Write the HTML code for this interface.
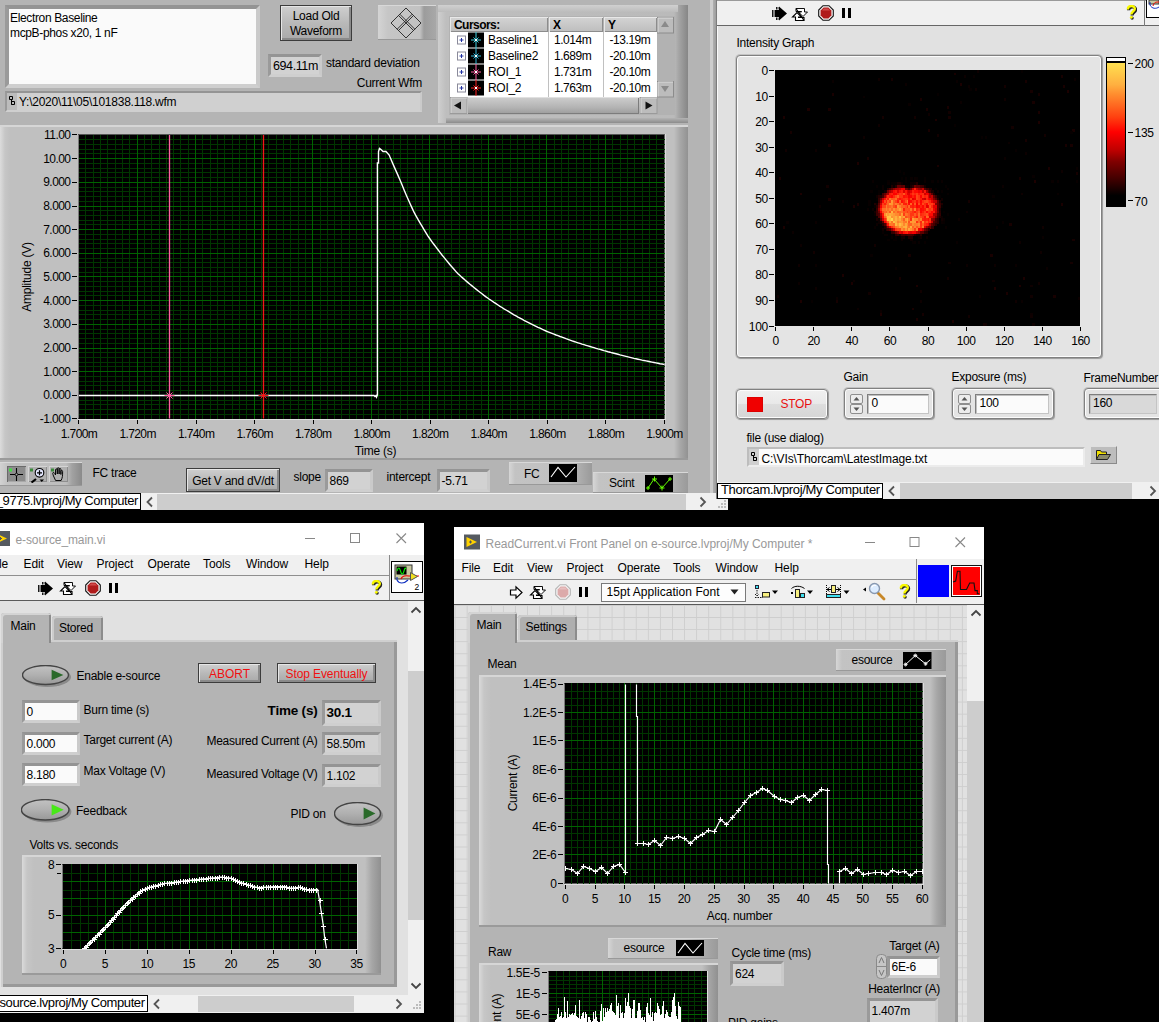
<!DOCTYPE html><html><head><meta charset="utf-8"><title>LabVIEW</title><style>
*{box-sizing:border-box;margin:0;padding:0}
html,body{width:1159px;height:1022px;overflow:hidden;background:#000}
body{position:relative;font-family:"Liberation Sans",sans-serif;font-size:12px;color:#000}
.a{position:absolute}
.t{position:absolute;white-space:nowrap;line-height:14px;font-size:12px;letter-spacing:-0.25px}
.r{text-align:right}
.win{position:absolute;overflow:hidden}
.fld{position:absolute;border:3px solid;border-color:#949494 #cacaca #cfcfcf #9a9a9a;background:#d2d2d2;overflow:hidden}
.fld.w{background:#fafafa}
.fld .t{left:2px}
.btn{position:absolute;border:1px solid #3c3c3c;background:linear-gradient(#cfcfcf,#b9b9b9 50%,#a9a9a9);box-shadow:inset 1px 1px 0 #e6e6e6,inset -2px -2px 0 #8a8a8a;text-align:center}
.leg{position:absolute;background:linear-gradient(90deg,#d6d6d6 0,#c3c3c3 6px,#c0c0c0 70%,#9a9a9a 100%);box-shadow:inset 0 1px 0 #d8d8d8,inset 0 -1px 0 #999}
.tick{position:absolute;background:#000}
.sb{position:absolute;background:#f0f0f0}
.th{position:absolute;background:#cdcdcd}
.sys{position:absolute;border:1px solid #808080;border-radius:4px;background:#e4e4e4;box-shadow:inset 0 0 0 1px #fcfcfc,0 0 0 1px rgba(120,120,120,.28),1px 1px 1px #aaa}
</style></head><body>
<div class="a" style="left:0;top:0;width:728px;height:510px;background:#f0f0f0"></div>
<div class="a" style="left:0;top:0;width:710px;height:493px;background:#b4b4b4"></div>
<div class="a" style="left:710px;top:0;width:2.500px;height:493px;background:#cdcdcd"></div><div class="a" style="left:712.500px;top:0;width:4px;height:493px;background:linear-gradient(90deg,#b0b0b0,#969696)"></div>
<div class="fld w" style="left:5px;top:5px;width:255px;height:83px;border-width:4px"></div>
<div class="t " style="left:10.0px;top:11.0px;letter-spacing:-0.35px">Electron Baseline</div>
<div class="t " style="left:10.0px;top:26.0px;letter-spacing:-0.35px">mcpB-phos x20, 1 nF</div>
<div class="fld" style="left:5px;top:91px;width:417px;height:21px;border-width:2px;background:#d0d0d0"></div>
<div class="a" style="left:7px;top:93px;width:10px;height:17px;background:#bcbcbc"></div>
<svg class="a" style="left:8px;top:95px" width="8" height="12"><path d="M1.5 1.5h3v3h-3zM3.5 4.5v5M3.5 6.5h3v3h-3z" fill="none" stroke="#000"/></svg>
<div class="t " style="left:19.0px;top:94.5px;">Y:\2020\11\05\101838.118.wfm</div>
<div class="btn" style="left:280px;top:5px;width:72px;height:36px"></div>
<div class="t" style="left:316.0px;top:9.0px;width:200px;margin-left:-100px;text-align:center;">Load Old</div>
<div class="t" style="left:316.0px;top:24.0px;width:200px;margin-left:-100px;text-align:center;">Waveform</div>
<div class="leg" style="left:378px;top:5px;width:58px;height:35px;background:linear-gradient(90deg,#d4d4d4 0,#c6c6c6 10px,#c2c2c2 42px,#9c9c9c 46px,#a8a8a8 100%)"></div>
<svg class="a" style="left:390px;top:7px" width="32" height="32" viewBox="0 0 32 32"><path d="M16 1L31 16L16 31L1 16ZM8.5 8.5L23.5 23.5M23.5 8.5L8.5 23.5M9.8 7.2L24.8 22.2M22.2 7.2L7.2 22.2" fill="none" stroke="#222" stroke-width="0.9"/></svg>
<div class="fld " style="left:268.0px;top:53.5px;width:53.5px;height:23.5px;"><div class="t" style="top:2.2px;letter-spacing:-0.4px;font-size:12.5px">694.11m</div></div>
<div class="t " style="left:326.0px;top:55.5px;">standard deviation</div>
<div class="t r" style="right:737.0px;top:76.0px;">Current Wfm</div>
<div class="a" style="left:438px;top:5px;width:250px;height:118px;background:linear-gradient(90deg,#cfcfcf 0,#bebebe 8px,#bababa 236px,#a4a4a4 241px,#868686 250px)"></div>
<div class="a" style="left:438px;top:5px;width:240px;height:7px;background:linear-gradient(#d0d0d0,#bcbcbc)"></div>
<div class="a" style="left:446px;top:118px;width:242px;height:5px;background:linear-gradient(#b4b4b4,#8c8c8c)"></div>
<div class="a" style="left:449px;top:15.500px;width:225.500px;height:99.500px;background:#b2b2b2"></div>
<div class="a" style="left:450px;top:31.500px;width:207px;height:65.500px;background:#fff"></div>
<div class="a" style="left:657px;top:32.500px;width:16.500px;height:48px;background:#b2b2b2"></div>
<div class="a" style="left:450px;top:16.500px;width:98px;height:15px;background:linear-gradient(#d4d4d4,#bdbdbd);box-shadow:inset 1px 1px 0 #e8e8e8,inset -1px -1px 0 #8c8c8c"></div>
<div class="t " style="left:454.0px;top:17.5px;font-weight:bold;letter-spacing:-0.55px">Cursors:</div>
<div class="a" style="left:549px;top:16.500px;width:54px;height:15px;background:linear-gradient(#d4d4d4,#bdbdbd);box-shadow:inset 1px 1px 0 #e8e8e8,inset -1px -1px 0 #8c8c8c"></div>
<div class="t " style="left:553.0px;top:17.5px;font-weight:bold;letter-spacing:-0.55px">X</div>
<div class="a" style="left:604px;top:16.500px;width:53px;height:15px;background:linear-gradient(#d4d4d4,#bdbdbd);box-shadow:inset 1px 1px 0 #e8e8e8,inset -1px -1px 0 #8c8c8c"></div>
<div class="t " style="left:608.0px;top:17.5px;font-weight:bold;letter-spacing:-0.55px">Y</div>
<div class="a" style="left:548px;top:31.500px;width:1px;height:65.500px;background:#c0c0c0"></div><div class="a" style="left:603px;top:31.500px;width:1px;height:65.500px;background:#c0c0c0"></div>
<svg class="a" style="left:457px;top:31.5px" width="28" height="16"><rect x="0.500" y="4" width="8" height="8" fill="#fff" stroke="#8a8a9a"/><path d="M2.500 8h4M4.500 6v4" stroke="#2030a0"/><rect x="11" y="0.500" width="16" height="15" fill="#000"/><path d="M19 0v16M14 8h10M16.500 5.500l5 5M21.500 5.500l-5 5" stroke="#3fd0e0" stroke-width="1"/><rect x="18" y="7" width="2" height="2" fill="#fff"/></svg>
<div class="t " style="left:488.0px;top:33.0px;letter-spacing:-0.3px">Baseline1</div>
<div class="t " style="left:554.0px;top:33.0px;letter-spacing:-0.45px">1.014m</div>
<div class="t " style="left:609.5px;top:33.0px;letter-spacing:-0.45px">-13.19m</div>
<svg class="a" style="left:457px;top:47.5px" width="28" height="16"><rect x="0.500" y="4" width="8" height="8" fill="#fff" stroke="#8a8a9a"/><path d="M2.500 8h4M4.500 6v4" stroke="#2030a0"/><rect x="11" y="0.500" width="16" height="15" fill="#000"/><path d="M19 0v16M14 8h10M16.500 5.500l5 5M21.500 5.500l-5 5" stroke="#35b8d8" stroke-width="1"/><rect x="18" y="7" width="2" height="2" fill="#fff"/></svg>
<div class="t " style="left:488.0px;top:49.0px;letter-spacing:-0.3px">Baseline2</div>
<div class="t " style="left:554.0px;top:49.0px;letter-spacing:-0.45px">1.689m</div>
<div class="t " style="left:609.5px;top:49.0px;letter-spacing:-0.45px">-20.10m</div>
<svg class="a" style="left:457px;top:63.5px" width="28" height="16"><rect x="0.500" y="4" width="8" height="8" fill="#fff" stroke="#8a8a9a"/><path d="M2.500 8h4M4.500 6v4" stroke="#2030a0"/><rect x="11" y="0.500" width="16" height="15" fill="#000"/><path d="M19 0v16M14 8h10M16.500 5.500l5 5M21.500 5.500l-5 5" stroke="#ff5fa0" stroke-width="1"/><rect x="18" y="7" width="2" height="2" fill="#fff"/></svg>
<div class="t " style="left:488.0px;top:65.0px;letter-spacing:-0.3px">ROI_1</div>
<div class="t " style="left:554.0px;top:65.0px;letter-spacing:-0.45px">1.731m</div>
<div class="t " style="left:609.5px;top:65.0px;letter-spacing:-0.45px">-20.10m</div>
<svg class="a" style="left:457px;top:79.5px" width="28" height="16"><rect x="0.500" y="4" width="8" height="8" fill="#fff" stroke="#8a8a9a"/><path d="M2.500 8h4M4.500 6v4" stroke="#2030a0"/><rect x="11" y="0.500" width="16" height="15" fill="#000"/><path d="M19 0v16M14 8h10M16.500 5.500l5 5M21.500 5.500l-5 5" stroke="#ff2020" stroke-width="1"/><rect x="18" y="7" width="2" height="2" fill="#fff"/></svg>
<div class="t " style="left:488.0px;top:81.0px;letter-spacing:-0.3px">ROI_2</div>
<div class="t " style="left:554.0px;top:81.0px;letter-spacing:-0.45px">1.763m</div>
<div class="t " style="left:609.5px;top:81.0px;letter-spacing:-0.45px">-20.10m</div>
<svg class="a" style="left:657px;top:16.5px" width="17" height="17"><rect x="0.500" y="0.500" width="16" height="15.500" fill="#bcbcbc" stroke="#8c8c8c"/><path d="M1 15.500V1H16" stroke="#dcdcdc" fill="none"/><path d="M4 10L8 4L12 10Z" fill="#8a8a8a"/></svg>
<svg class="a" style="left:657px;top:80.5px" width="17" height="17"><rect x="0.500" y="0.500" width="16" height="15.500" fill="#bcbcbc" stroke="#8c8c8c"/><path d="M1 15.500V1H16" stroke="#dcdcdc" fill="none"/><path d="M4 5L8 11L12 5Z" fill="#8a8a8a"/></svg>
<div class="a" style="left:450px;top:97px;width:207px;height:17px;background:linear-gradient(#c8c8c8,#aaa)"></div>
<div class="a" style="left:466.500px;top:97px;width:172px;height:17px;background:linear-gradient(#cecece,#b4b4b4 60%,#9c9c9c);box-shadow:inset 1px 1px 0 #e0e0e0,inset -1px -1px 0 #7c7c7c"></div>
<svg class="a" style="left:450.0px;top:97px" width="18" height="17"><rect x="0.500" y="0.500" width="16.500" height="16" fill="#bcbcbc" stroke="#9a9a9a"/><path d="M1 16V1H17" stroke="#d8d8d8" fill="none"/><path d="M11 4.500L4 8.500L11 12.500Z" fill="#111"/></svg>
<svg class="a" style="left:639.5px;top:97px" width="18" height="17"><rect x="0.500" y="0.500" width="16.500" height="16" fill="#bcbcbc" stroke="#9a9a9a"/><path d="M1 16V1H17" stroke="#d8d8d8" fill="none"/><path d="M5.500 4.500L12.500 8.500L5.500 12.500Z" fill="#111"/></svg>
<div class="a" style="left:0;top:125px;width:688px;height:335px;background:linear-gradient(90deg,#dcdcdc 0,#c6c6c6 5px,#c0c0c0 10px,#c0c0c0 674px,#a8a8a8 680px,#8f8f8f 689px);box-shadow:inset 0 2px 0 #d6d6d6,inset 0 -2px 0 #9a9a9a"></div>
<svg class="a" style="left:78.0px;top:134.0px" width="586.5" height="285.0" viewBox="78.0 134.0 586.5 285.0"><rect x="78.0" y="134.0" width="586.5" height="285.0" fill="#000"/><path d="M85.5 134.0V419.0M93.5 134.0V419.0M100.5 134.0V419.0M107.5 134.0V419.0M115.5 134.0V419.0M122.5 134.0V419.0M129.5 134.0V419.0M144.5 134.0V419.0M151.5 134.0V419.0M159.5 134.0V419.0M166.5 134.0V419.0M173.5 134.0V419.0M180.5 134.0V419.0M188.5 134.0V419.0M202.5 134.0V419.0M210.5 134.0V419.0M217.5 134.0V419.0M224.5 134.0V419.0M232.5 134.0V419.0M239.5 134.0V419.0M246.5 134.0V419.0M261.5 134.0V419.0M268.5 134.0V419.0M276.5 134.0V419.0M283.5 134.0V419.0M290.5 134.0V419.0M298.5 134.0V419.0M305.5 134.0V419.0M320.5 134.0V419.0M327.5 134.0V419.0M334.5 134.0V419.0M341.5 134.0V419.0M349.5 134.0V419.0M356.5 134.0V419.0M363.5 134.0V419.0M378.5 134.0V419.0M385.5 134.0V419.0M393.5 134.0V419.0M400.5 134.0V419.0M407.5 134.0V419.0M415.5 134.0V419.0M422.5 134.0V419.0M437.5 134.0V419.0M444.5 134.0V419.0M451.5 134.0V419.0M459.5 134.0V419.0M466.5 134.0V419.0M473.5 134.0V419.0M481.5 134.0V419.0M495.5 134.0V419.0M502.5 134.0V419.0M510.5 134.0V419.0M517.5 134.0V419.0M524.5 134.0V419.0M532.5 134.0V419.0M539.5 134.0V419.0M554.5 134.0V419.0M561.5 134.0V419.0M568.5 134.0V419.0M576.5 134.0V419.0M583.5 134.0V419.0M590.5 134.0V419.0M598.5 134.0V419.0M612.5 134.0V419.0M620.5 134.0V419.0M627.5 134.0V419.0M634.5 134.0V419.0M642.5 134.0V419.0M649.5 134.0V419.0M656.5 134.0V419.0M78.0 414.5H664.5M78.0 409.5H664.5M78.0 404.5H664.5M78.0 400.5H664.5M78.0 390.5H664.5M78.0 385.5H664.5M78.0 381.5H664.5M78.0 376.5H664.5M78.0 366.5H664.5M78.0 362.5H664.5M78.0 357.5H664.5M78.0 352.5H664.5M78.0 343.5H664.5M78.0 338.5H664.5M78.0 333.5H664.5M78.0 329.5H664.5M78.0 319.5H664.5M78.0 314.5H664.5M78.0 310.5H664.5M78.0 305.5H664.5M78.0 295.5H664.5M78.0 291.5H664.5M78.0 286.5H664.5M78.0 281.5H664.5M78.0 272.5H664.5M78.0 267.5H664.5M78.0 262.5H664.5M78.0 258.5H664.5M78.0 248.5H664.5M78.0 243.5H664.5M78.0 239.5H664.5M78.0 234.5H664.5M78.0 224.5H664.5M78.0 220.5H664.5M78.0 215.5H664.5M78.0 210.5H664.5M78.0 201.5H664.5M78.0 196.5H664.5M78.0 191.5H664.5M78.0 187.5H664.5M78.0 177.5H664.5M78.0 172.5H664.5M78.0 168.5H664.5M78.0 163.5H664.5M78.0 153.5H664.5M78.0 149.5H664.5M78.0 144.5H664.5M78.0 139.5H664.5" stroke="#003600" stroke-width="1" fill="none" shape-rendering="crispEdges"/><path d="M137.5 134.0V419.0M195.5 134.0V419.0M254.5 134.0V419.0M312.5 134.0V419.0M371.5 134.0V419.0M429.5 134.0V419.0M488.5 134.0V419.0M546.5 134.0V419.0M605.5 134.0V419.0M78.0 395.5H664.5M78.0 371.5H664.5M78.0 348.5H664.5M78.0 324.5H664.5M78.0 300.5H664.5M78.0 276.5H664.5M78.0 253.5H664.5M78.0 229.5H664.5M78.0 206.5H664.5M78.0 182.5H664.5M78.0 158.5H664.5" stroke="#006300" stroke-width="1" fill="none" shape-rendering="crispEdges"/><polyline points="78.5,395.5 374.0,395.5 375.0,396.5 376.0,395.5 376.5,397.0 377.4,395.0 377.4,163.0 378.5,163.0 378.5,151.7 379.5,148.4 381.0,149.5 383.0,151.5 386.0,151.5 389.2,155.0 390.0,157.1 392.0,161.8 394.0,166.4 396.0,170.9 398.0,175.4 400.0,179.9 402.0,184.8 404.0,189.7 406.0,194.4 408.0,199.0 410.0,203.5 412.0,207.9 414.0,212.2 416.0,215.8 418.0,219.4 420.0,222.8 422.0,226.2 424.0,229.6 426.0,232.9 428.0,236.1 430.0,239.0 432.0,241.8 434.0,244.5 436.0,247.2 438.0,249.8 440.0,252.4 442.0,255.0 444.0,257.4 446.0,259.9 448.0,262.3 450.0,264.7 452.0,267.0 454.0,269.3 456.0,271.6 458.0,273.8 460.0,275.6 462.0,277.4 464.0,279.1 466.0,280.9 468.0,282.6 470.0,284.3 472.0,285.9 474.0,287.5 476.0,289.1 478.0,290.7 480.0,292.3 482.0,293.8 484.0,295.4 486.0,296.9 488.0,298.3 490.0,299.7 492.0,301.0 494.0,302.4 496.0,303.7 498.0,305.0 500.0,306.3 502.0,307.5 504.0,308.8 506.0,310.0 508.0,311.2 510.0,312.4 512.0,313.6 514.0,314.8 516.0,315.9 518.0,317.1 520.0,318.1 522.0,319.2 524.0,320.3 526.0,321.3 528.0,322.3 530.0,323.3 532.0,324.3 534.0,325.3 536.0,326.3 538.0,327.3 540.0,328.2 542.0,329.2 544.0,330.1 546.0,331.0 548.0,331.8 550.0,332.6 552.0,333.4 554.0,334.2 556.0,335.0 558.0,335.7 560.0,336.5 562.0,337.2 564.0,337.9 566.0,338.7 568.0,339.4 570.0,340.1 572.0,340.8 574.0,341.5 576.0,342.2 578.0,342.8 580.0,343.4 582.0,344.1 584.0,344.7 586.0,345.3 588.0,345.9 590.0,346.5 592.0,347.1 594.0,347.7 596.0,348.3 598.0,348.9 600.0,349.4 602.0,350.0 604.0,350.6 606.0,351.1 608.0,351.7 610.0,352.2 612.0,352.8 614.0,353.3 616.0,353.8 618.0,354.3 620.0,354.9 622.0,355.4 624.0,355.9 626.0,356.4 628.0,356.9 630.0,357.4 632.0,357.9 634.0,358.4 636.0,358.8 638.0,359.2 640.0,359.6 642.0,360.1 644.0,360.5 646.0,360.9 648.0,361.3 650.0,361.7 652.0,362.1 654.0,362.5 656.0,362.9 658.0,363.3 660.0,363.7 662.0,364.0 664.0,364.4 664.5,364.5" fill="none" stroke="#fff" stroke-width="1.4"/><path d="M169.5 134.5V418.5" stroke="#ff5fa0" stroke-width="1.3"/><path d="M263.5 134.5V418.5" stroke="#f01818" stroke-width="1.3"/><path d="M164.5 395.5h10M166.5 392.5l6 6M172.5 392.5l-6 6" stroke="#ff5fa0" stroke-width="1"/><path d="M258.5 395.5h10M260.5 392.5l6 6M266.5 392.5l-6 6" stroke="#f01818" stroke-width="1"/><path d="M78.5 134.5V418.5" stroke="#7a7a7a" stroke-width="1"/><path d="M78.5 134.5H664.0" stroke="#555" stroke-width="1"/></svg>
<div class="a" style="left:78.0px;top:419.0px;width:587.5px;height:1px;background:#dedede"></div><div class="a" style="left:664.5px;top:134.0px;width:1px;height:286.0px;background:#dedede"></div>
<div class="t r" style="right:1088.5px;top:412.0px;letter-spacing:-0.55px">-1.000</div>
<div class="tick" style="left:72px;top:418px;width:5px;height:1px"></div>
<div class="t r" style="right:1088.5px;top:388.3px;letter-spacing:-0.55px">0.000</div>
<div class="tick" style="left:72px;top:395px;width:5px;height:1px"></div>
<div class="t r" style="right:1088.5px;top:364.7px;letter-spacing:-0.55px">1.000</div>
<div class="tick" style="left:72px;top:371px;width:5px;height:1px"></div>
<div class="t r" style="right:1088.5px;top:341.0px;letter-spacing:-0.55px">2.000</div>
<div class="tick" style="left:72px;top:348px;width:5px;height:1px"></div>
<div class="t r" style="right:1088.5px;top:317.3px;letter-spacing:-0.55px">3.000</div>
<div class="tick" style="left:72px;top:324px;width:5px;height:1px"></div>
<div class="t r" style="right:1088.5px;top:293.7px;letter-spacing:-0.55px">4.000</div>
<div class="tick" style="left:72px;top:300px;width:5px;height:1px"></div>
<div class="t r" style="right:1088.5px;top:270.0px;letter-spacing:-0.55px">5.000</div>
<div class="tick" style="left:72px;top:276px;width:5px;height:1px"></div>
<div class="t r" style="right:1088.5px;top:246.3px;letter-spacing:-0.55px">6.000</div>
<div class="tick" style="left:72px;top:253px;width:5px;height:1px"></div>
<div class="t r" style="right:1088.5px;top:222.7px;letter-spacing:-0.55px">7.000</div>
<div class="tick" style="left:72px;top:229px;width:5px;height:1px"></div>
<div class="t r" style="right:1088.5px;top:199.0px;letter-spacing:-0.55px">8.000</div>
<div class="tick" style="left:72px;top:206px;width:5px;height:1px"></div>
<div class="t r" style="right:1088.5px;top:175.3px;letter-spacing:-0.55px">9.000</div>
<div class="tick" style="left:72px;top:182px;width:5px;height:1px"></div>
<div class="t r" style="right:1088.5px;top:151.7px;letter-spacing:-0.55px">10.00</div>
<div class="tick" style="left:72px;top:158px;width:5px;height:1px"></div>
<div class="t r" style="right:1088.5px;top:128.0px;letter-spacing:-0.55px">11.00</div>
<div class="tick" style="left:72px;top:134px;width:5px;height:1px"></div>
<div class="t" style="left:79.0px;top:426.5px;width:200px;margin-left:-100px;text-align:center;letter-spacing:-0.6px">1.700m</div>
<div class="tick" style="left:78px;top:420px;width:1px;height:4px"></div>
<div class="t" style="left:137.6px;top:426.5px;width:200px;margin-left:-100px;text-align:center;letter-spacing:-0.6px">1.720m</div>
<div class="tick" style="left:137px;top:420px;width:1px;height:4px"></div>
<div class="t" style="left:196.1px;top:426.5px;width:200px;margin-left:-100px;text-align:center;letter-spacing:-0.6px">1.740m</div>
<div class="tick" style="left:196px;top:420px;width:1px;height:4px"></div>
<div class="t" style="left:254.7px;top:426.5px;width:200px;margin-left:-100px;text-align:center;letter-spacing:-0.6px">1.760m</div>
<div class="tick" style="left:254px;top:420px;width:1px;height:4px"></div>
<div class="t" style="left:313.2px;top:426.5px;width:200px;margin-left:-100px;text-align:center;letter-spacing:-0.6px">1.780m</div>
<div class="tick" style="left:313px;top:420px;width:1px;height:4px"></div>
<div class="t" style="left:371.8px;top:426.5px;width:200px;margin-left:-100px;text-align:center;letter-spacing:-0.6px">1.800m</div>
<div class="tick" style="left:371px;top:420px;width:1px;height:4px"></div>
<div class="t" style="left:430.3px;top:426.5px;width:200px;margin-left:-100px;text-align:center;letter-spacing:-0.6px">1.820m</div>
<div class="tick" style="left:430px;top:420px;width:1px;height:4px"></div>
<div class="t" style="left:488.8px;top:426.5px;width:200px;margin-left:-100px;text-align:center;letter-spacing:-0.6px">1.840m</div>
<div class="tick" style="left:488px;top:420px;width:1px;height:4px"></div>
<div class="t" style="left:547.4px;top:426.5px;width:200px;margin-left:-100px;text-align:center;letter-spacing:-0.6px">1.860m</div>
<div class="tick" style="left:547px;top:420px;width:1px;height:4px"></div>
<div class="t" style="left:605.9px;top:426.5px;width:200px;margin-left:-100px;text-align:center;letter-spacing:-0.6px">1.880m</div>
<div class="tick" style="left:605px;top:420px;width:1px;height:4px"></div>
<div class="t" style="left:664.5px;top:426.5px;width:200px;margin-left:-100px;text-align:center;letter-spacing:-0.6px">1.900m</div>
<div class="tick" style="left:664px;top:420px;width:1px;height:4px"></div>
<div class="t" style="left:375.5px;top:444.0px;width:200px;margin-left:-100px;text-align:center;">Time (s)</div>
<div class="t" style="left:-23px;top:270px;width:100px;text-align:center;transform:rotate(-90deg)">Amplitude (V)</div>
<div class="leg" style="left:0px;top:462px;width:81.500px;height:23.500px;background:linear-gradient(90deg,#d2d2d2 0,#c2c2c2 8px,#bebebe 66px,#a2a2a2 72px,#8a8a8a 100%)"></div>
<div class="a" style="left:6.5px;top:466px;width:19.5px;height:16px;background:#8c8c8c;box-shadow:inset 1px 1px 0 #6a6a6a,inset -1px -1px 0 #a8a8a8"></div>
<div class="a" style="left:28.0px;top:466px;width:19.0px;height:16px;background:#b0b0b0;box-shadow:inset 1px 1px 0 #d4d4d4,inset -1px -1px 0 #8e8e8e"></div>
<div class="a" style="left:49.0px;top:466px;width:18.7px;height:16px;background:#b0b0b0;box-shadow:inset 1px 1px 0 #d4d4d4,inset -1px -1px 0 #8e8e8e"></div>
<svg class="a" style="left:6px;top:465px" width="64" height="18"><path d="M10.500 3v13M4 9.500h13" stroke="#000" stroke-width="1.1"/><circle cx="10.500" cy="9.500" r="1.300" fill="#aaa" stroke="#000" stroke-width="0.8"/><rect x="3" y="3.500" width="3" height="3" fill="#40e040"/><path d="M30 14L25.500 17.500" stroke="#000" stroke-width="2.200"/><circle cx="33.500" cy="7.800" r="4.300" fill="#e4e8ff" stroke="#000" stroke-width="1.1"/><path d="M31 7.800h5M33.500 5.300v5" stroke="#000" stroke-width="1.2"/><path d="M33.500 14.500h4.500l-2.250 2.500z" fill="#000"/><rect x="24" y="3.500" width="3" height="3" fill="#3a8a3a"/><path d="M47.500 11c-1-2.500-1-3.500 0-3.500s1.500 1.500 2 2.500V5c0-1.500 1.800-1.500 1.800 0v4V3.800c0-1.500 1.800-1.500 1.800 0V9V4.500c0-1.500 1.800-1.500 1.800 0V9.500V6.500c0-1.500 1.700-1.500 1.700 0c0 4 0 6-1.500 9h-5.500z" fill="none" stroke="#000" stroke-width="0.95"/><rect x="45" y="3.500" width="3" height="3" fill="#3a8a3a"/></svg>
<div class="t " style="left:92.5px;top:466.0px;">FC trace</div>
<div class="btn" style="left:186px;top:468px;width:94px;height:24px"></div>
<div class="t" style="left:233.0px;top:474.0px;width:200px;margin-left:-100px;text-align:center;">Get V and dV/dt</div>
<div class="t " style="left:293.5px;top:470.0px;">slope</div>
<div class="fld " style="left:324.5px;top:469.0px;width:48.0px;height:23.0px;"><div class="t" style="top:2.0px;">869</div></div>
<div class="t " style="left:386.5px;top:470.0px;">intercept</div>
<div class="fld " style="left:436.5px;top:469.0px;width:53.5px;height:23.0px;"><div class="t" style="top:2.0px;">-5.71</div></div>
<div class="leg" style="left:509px;top:462px;width:83px;height:23px"></div>
<div class="t " style="left:524.0px;top:466.5px;">FC</div>
<svg class="a" style="left:549px;top:464px" width="28" height="18"><rect width="28" height="18" fill="#000"/><path d="M2 13L9 3.500L17 13L26 3" fill="none" stroke="#fff" stroke-width="1.1"/></svg>
<div class="leg" style="left:593px;top:472px;width:95px;height:21px"></div>
<div class="t " style="left:609.0px;top:476.0px;">Scint</div>
<svg class="a" style="left:645px;top:474.500px" width="28" height="17"><rect width="28" height="17" fill="#000"/><path d="M3 13L9 4L17 13L25 4M7 4h5M9.500 1.500v5M14.500 13h5M17 10.500v5M1 13h4M3 11v4M23 4h4M25 2v4" fill="none" stroke="#6f0" stroke-width="1"/></svg>
<div class="a" style="left:157px;top:494px;width:529px;height:16px;background:#cdcdcd"></div>
<div class="a" style="left:0;top:493px;width:140.500px;height:17px;background:#fff;border:1px solid #000;border-left:0"></div>
<div class="t " style="left:-4.2px;top:493.8px;font-size:13px;letter-spacing:-0.43px">_9775.lvproj/My Computer</div>
<svg class="a" style="left:143.500px;top:495px" width="12" height="14"><path d="M8 2.500L3.500 7L8 11.500" fill="none" stroke="#555" stroke-width="1.8"/></svg>
<svg class="a" style="left:697px;top:495px" width="12" height="14"><path d="M3.500 2.500L8 7L3.500 11.500" fill="none" stroke="#555" stroke-width="1.8"/></svg>
<svg class="a" style="left:716px;top:499px" width="12" height="11"><path d="M8 2h2M8 5h2M5 5h2M8 8h2M5 8h2M2 8h2" stroke="#bbb" stroke-width="2"/></svg>
<div class="a" style="left:716px;top:0;width:443px;height:499px;background:#e1e1e1;border-left:1px solid #7c7c7c"></div><div class="a" style="left:717px;top:0;width:1px;height:482px;background:#fafafa"></div>
<div class="a" style="left:717px;top:0;width:442px;height:26px;background:#f0f0f0;border-bottom:1px solid #666;border-top:1px solid #9a9a9a"></div>
<svg class="a" style="left:770.5px;top:6.0px" width="17" height="15" viewBox="0 0 17 15"><path d="M4 4h4V0.500L16 7.500L8 14.500V11H4z" fill="#000"/><path d="M1.500 4v7M3 4v7" stroke="#000" stroke-width="0.9"/><path d="M5.500 1v2.500M7 1v2.500M5.500 11.500V14M7 11.500V14" stroke="#000" stroke-width="0.9"/></svg>
<svg class="a" style="left:791.0px;top:6.5px" width="18" height="15" viewBox="0 0 18 15"><path d="M5 1.500h8.500v3.500h3L12 9.500L7.500 5h3V4.500H5z" fill="#fff" stroke="#000" stroke-width="0.95"/><path d="M13 13.500H4.500V10h-3L6 5.500L10.500 10h-3v0.500H13z" fill="#fff" stroke="#000" stroke-width="1.1"/><path d="M5 1.500L13 13.500" stroke="#000" stroke-width="1.1"/></svg>
<svg class="a" style="left:817.5px;top:5.3px" width="16" height="16" viewBox="0 0 16 16"><path d="M5 0.700h6L15.300 5v6L11 15.300H5L0.700 11V5z" fill="#f4f4f4" stroke="#111" stroke-width="1.1"/><path d="M5.600 2.600h4.800l3 3v4.800l-3 3H5.600l-3-3V5.600z" fill="#b01c1c"/><path d="M5.800 3.600h4.400l1.800 1.800H4z" fill="#e06060" opacity=".7"/></svg>
<div class="a" style="left:842.0px;top:8.0px;width:3px;height:10px;background:#000"></div><div class="a" style="left:848.0px;top:8.0px;width:3px;height:10px;background:#000"></div>
<svg class="a" style="left:1125.5px;top:4.8px" width="11.500" height="15" viewBox="0 0 13 17"><path d="M2.200 5.200c0-5 8-5 8 -0.700c0 3-4 3-4 6.500" fill="none" stroke="#222" stroke-width="3.600" transform="translate(.7 .8)"/><circle cx="6.900" cy="14.800" r="1.900" fill="#222"/><path d="M2 5c0-5 8-5 8-0.700c0 3-4 3-4 6.500" fill="none" stroke="#fafa00" stroke-width="2.700"/><circle cx="6" cy="14" r="1.600" fill="#fafa00"/></svg>
<div class="a" style="left:1144px;top:0;width:1px;height:26px;background:#7a7a7a"></div>
<div class="a" style="left:1146px;top:-14px;width:20px;height:32px;background:#fff;border:1px solid #000"></div>
<svg class="a" style="left:1147px;top:0" width="12" height="10"><rect x="2" y="0" width="10" height="4" fill="#c8c8a0" stroke="#333"/><path d="M3 2v3c2 4 6 4 9 2" fill="none" stroke="#1030c0"/><path d="M6 6c1-4 3-4 6-4" fill="none" stroke="#e00"/></svg>
<div class="t " style="left:736.5px;top:35.5px;">Intensity Graph</div>
<div class="sys" style="left:735.5px;top:54.500px;width:366px;height:303.500px"></div>
<svg shape-rendering="crispEdges" class="a" style="left:775.0px;top:70.0px" width="305.0" height="255.5" viewBox="775.0 70.0 305.0 255.5"><rect x="775.0" y="70.0" width="305.0" height="255.5" fill="#000"/><rect x="977.06" y="70.00" width="2.21" height="2.85" fill="#0d0000"/><rect x="1020.91" y="70.00" width="2.21" height="2.85" fill="#060000"/><rect x="954.19" y="72.56" width="2.21" height="2.85" fill="#170000"/><rect x="963.72" y="75.11" width="2.21" height="2.85" fill="#0c0000"/><rect x="973.25" y="75.11" width="2.21" height="2.85" fill="#090000"/><rect x="1060.94" y="75.11" width="2.21" height="2.85" fill="#170000"/><rect x="877.94" y="77.67" width="2.21" height="2.85" fill="#0f0000"/><rect x="891.28" y="77.67" width="2.21" height="2.85" fill="#160000"/><rect x="1074.28" y="77.67" width="2.21" height="2.85" fill="#0c0000"/><rect x="832.19" y="80.22" width="2.21" height="2.85" fill="#0a0000"/><rect x="956.09" y="80.22" width="2.21" height="2.85" fill="#090000"/><rect x="1024.72" y="80.22" width="2.21" height="2.85" fill="#160000"/><rect x="904.62" y="82.78" width="2.21" height="2.85" fill="#0b0000"/><rect x="959.91" y="82.78" width="2.21" height="2.85" fill="#1a0000"/><rect x="967.53" y="85.33" width="2.21" height="2.85" fill="#0b0000"/><rect x="1003.75" y="85.33" width="2.21" height="2.85" fill="#130000"/><rect x="1062.84" y="85.33" width="2.21" height="2.85" fill="#180000"/><rect x="969.44" y="87.89" width="2.21" height="2.85" fill="#070000"/><rect x="975.16" y="87.89" width="2.21" height="2.85" fill="#0f0000"/><rect x="1030.44" y="90.44" width="2.21" height="2.85" fill="#150000"/><rect x="1066.66" y="90.44" width="2.21" height="2.85" fill="#1b0000"/><rect x="832.19" y="93.00" width="2.21" height="2.85" fill="#180000"/><rect x="937.03" y="93.00" width="2.21" height="2.85" fill="#070000"/><rect x="1038.06" y="93.00" width="2.21" height="2.85" fill="#140000"/><rect x="862.69" y="95.55" width="2.21" height="2.85" fill="#090000"/><rect x="919.88" y="98.11" width="2.21" height="2.85" fill="#180000"/><rect x="1003.75" y="98.11" width="2.21" height="2.85" fill="#100000"/><rect x="959.91" y="100.66" width="2.21" height="2.85" fill="#0b0000"/><rect x="1032.34" y="100.66" width="2.21" height="2.85" fill="#160000"/><rect x="908.44" y="103.22" width="2.21" height="2.85" fill="#0a0000"/><rect x="946.56" y="105.77" width="2.21" height="2.85" fill="#180000"/><rect x="807.41" y="108.33" width="2.21" height="2.85" fill="#1c0000"/><rect x="828.38" y="108.33" width="2.21" height="2.85" fill="#1a0000"/><rect x="925.59" y="108.33" width="2.21" height="2.85" fill="#180000"/><rect x="948.47" y="110.88" width="2.21" height="2.85" fill="#110000"/><rect x="1038.06" y="110.88" width="2.21" height="2.85" fill="#190000"/><rect x="927.50" y="113.44" width="2.21" height="2.85" fill="#0e0000"/><rect x="782.62" y="115.99" width="2.21" height="2.85" fill="#1a0000"/><rect x="881.75" y="115.99" width="2.21" height="2.85" fill="#140000"/><rect x="914.16" y="115.99" width="2.21" height="2.85" fill="#120000"/><rect x="948.47" y="115.99" width="2.21" height="2.85" fill="#160000"/><rect x="935.12" y="118.55" width="2.21" height="2.85" fill="#1c0000"/><rect x="1038.06" y="121.10" width="2.21" height="2.85" fill="#1b0000"/><rect x="877.94" y="123.66" width="2.21" height="2.85" fill="#0f0000"/><rect x="954.19" y="123.66" width="2.21" height="2.85" fill="#070000"/><rect x="1011.38" y="126.21" width="2.21" height="2.85" fill="#120000"/><rect x="927.50" y="128.76" width="2.21" height="2.85" fill="#180000"/><rect x="1072.38" y="128.76" width="2.21" height="2.85" fill="#180000"/><rect x="790.25" y="131.32" width="2.21" height="2.85" fill="#150000"/><rect x="1070.47" y="131.32" width="2.21" height="2.85" fill="#070000"/><rect x="937.03" y="133.88" width="2.21" height="2.85" fill="#130000"/><rect x="1043.78" y="133.88" width="2.21" height="2.85" fill="#120000"/><rect x="862.69" y="136.43" width="2.21" height="2.85" fill="#0e0000"/><rect x="980.88" y="136.43" width="2.21" height="2.85" fill="#070000"/><rect x="984.69" y="136.43" width="2.21" height="2.85" fill="#080000"/><rect x="1024.72" y="138.99" width="2.21" height="2.85" fill="#160000"/><rect x="1007.56" y="141.54" width="2.21" height="2.85" fill="#0b0000"/><rect x="828.38" y="144.09" width="2.21" height="2.85" fill="#180000"/><rect x="1064.75" y="144.09" width="2.21" height="2.85" fill="#170000"/><rect x="1070.47" y="144.09" width="2.21" height="2.85" fill="#170000"/><rect x="784.53" y="149.20" width="2.21" height="2.85" fill="#100000"/><rect x="815.03" y="149.20" width="2.21" height="2.85" fill="#0d0000"/><rect x="1015.19" y="149.20" width="2.21" height="2.85" fill="#080000"/><rect x="1024.72" y="151.76" width="2.21" height="2.85" fill="#0c0000"/><rect x="866.50" y="156.87" width="2.21" height="2.85" fill="#170000"/><rect x="1003.75" y="156.87" width="2.21" height="2.85" fill="#0b0000"/><rect x="856.97" y="161.98" width="2.21" height="2.85" fill="#1b0000"/><rect x="937.03" y="164.54" width="2.21" height="2.85" fill="#190000"/><rect x="1047.59" y="167.09" width="2.21" height="2.85" fill="#190000"/><rect x="1076.19" y="167.09" width="2.21" height="2.85" fill="#090000"/><rect x="898.91" y="169.65" width="2.21" height="2.85" fill="#060000"/><rect x="1060.94" y="169.65" width="2.21" height="2.85" fill="#0d0000"/><rect x="902.72" y="172.20" width="2.21" height="2.85" fill="#070000"/><rect x="1076.19" y="172.20" width="2.21" height="2.85" fill="#150000"/><rect x="1032.34" y="174.75" width="2.21" height="2.85" fill="#080000"/><rect x="778.81" y="177.31" width="2.21" height="2.85" fill="#190000"/><rect x="900.81" y="177.31" width="2.21" height="2.85" fill="#060000"/><rect x="904.62" y="177.31" width="2.21" height="2.85" fill="#080000"/><rect x="910.34" y="177.31" width="2.21" height="2.85" fill="#090000"/><rect x="914.16" y="177.31" width="2.21" height="2.85" fill="#0a0000"/><rect x="916.06" y="177.31" width="2.21" height="2.85" fill="#080000"/><rect x="923.69" y="177.31" width="2.21" height="2.85" fill="#070000"/><rect x="1019.00" y="177.31" width="2.21" height="2.85" fill="#160000"/><rect x="872.22" y="179.87" width="2.21" height="2.85" fill="#090000"/><rect x="887.47" y="179.87" width="2.21" height="2.85" fill="#060000"/><rect x="904.62" y="179.87" width="2.21" height="2.85" fill="#060000"/><rect x="923.69" y="179.87" width="2.21" height="2.85" fill="#0a0000"/><rect x="931.31" y="179.87" width="2.21" height="2.85" fill="#080000"/><rect x="937.03" y="179.87" width="2.21" height="2.85" fill="#090000"/><rect x="940.84" y="179.87" width="2.21" height="2.85" fill="#0a0000"/><rect x="1034.25" y="179.87" width="2.21" height="2.85" fill="#1c0000"/><rect x="1051.41" y="179.87" width="2.21" height="2.85" fill="#090000"/><rect x="1057.12" y="179.87" width="2.21" height="2.85" fill="#090000"/><rect x="1076.19" y="179.87" width="2.21" height="2.85" fill="#080000"/><rect x="887.47" y="182.42" width="2.21" height="2.85" fill="#090000"/><rect x="891.28" y="182.42" width="2.21" height="2.85" fill="#070000"/><rect x="893.19" y="182.42" width="2.21" height="2.85" fill="#080000"/><rect x="895.09" y="182.42" width="2.21" height="2.85" fill="#090000"/><rect x="897.00" y="182.42" width="2.21" height="2.85" fill="#1c0000"/><rect x="898.91" y="182.42" width="2.21" height="2.85" fill="#1c0000"/><rect x="900.81" y="182.42" width="2.21" height="2.85" fill="#0b0000"/><rect x="910.34" y="182.42" width="2.21" height="2.85" fill="#0d0000"/><rect x="912.25" y="182.42" width="2.21" height="2.85" fill="#0c0000"/><rect x="914.16" y="182.42" width="2.21" height="2.85" fill="#0e0000"/><rect x="916.06" y="182.42" width="2.21" height="2.85" fill="#220000"/><rect x="826.47" y="184.98" width="2.21" height="2.85" fill="#120000"/><rect x="876.03" y="184.98" width="2.21" height="2.85" fill="#080000"/><rect x="881.75" y="184.98" width="2.21" height="2.85" fill="#0b0000"/><rect x="891.28" y="184.98" width="2.21" height="2.85" fill="#1e0000"/><rect x="893.19" y="184.98" width="2.21" height="2.85" fill="#0b0000"/><rect x="895.09" y="184.98" width="2.21" height="2.85" fill="#250000"/><rect x="897.00" y="184.98" width="2.21" height="2.85" fill="#660000"/><rect x="898.91" y="184.98" width="2.21" height="2.85" fill="#640000"/><rect x="900.81" y="184.98" width="2.21" height="2.85" fill="#530000"/><rect x="902.72" y="184.98" width="2.21" height="2.85" fill="#600000"/><rect x="904.62" y="184.98" width="2.21" height="2.85" fill="#0d0000"/><rect x="906.53" y="184.98" width="2.21" height="2.85" fill="#090000"/><rect x="910.34" y="184.98" width="2.21" height="2.85" fill="#180000"/><rect x="912.25" y="184.98" width="2.21" height="2.85" fill="#2d0000"/><rect x="914.16" y="184.98" width="2.21" height="2.85" fill="#720000"/><rect x="916.06" y="184.98" width="2.21" height="2.85" fill="#5b0000"/><rect x="917.97" y="184.98" width="2.21" height="2.85" fill="#5b0000"/><rect x="919.88" y="184.98" width="2.21" height="2.85" fill="#400000"/><rect x="921.78" y="184.98" width="2.21" height="2.85" fill="#380000"/><rect x="923.69" y="184.98" width="2.21" height="2.85" fill="#140000"/><rect x="944.66" y="184.98" width="2.21" height="2.85" fill="#070000"/><rect x="1001.84" y="184.98" width="2.21" height="2.85" fill="#0b0000"/><rect x="881.75" y="187.53" width="2.21" height="2.85" fill="#0b0000"/><rect x="887.47" y="187.53" width="2.21" height="2.85" fill="#220000"/><rect x="889.38" y="187.53" width="2.21" height="2.85" fill="#400000"/><rect x="891.28" y="187.53" width="2.21" height="2.85" fill="#5e0000"/><rect x="893.19" y="187.53" width="2.21" height="2.85" fill="#8d0000"/><rect x="895.09" y="187.53" width="2.21" height="2.85" fill="#ae0000"/><rect x="897.00" y="187.53" width="2.21" height="2.85" fill="#b20000"/><rect x="898.91" y="187.53" width="2.21" height="2.85" fill="#c70000"/><rect x="900.81" y="187.53" width="2.21" height="2.85" fill="#f80000"/><rect x="902.72" y="187.53" width="2.21" height="2.85" fill="#f50000"/><rect x="904.62" y="187.53" width="2.21" height="2.85" fill="#790000"/><rect x="906.53" y="187.53" width="2.21" height="2.85" fill="#6d0000"/><rect x="908.44" y="187.53" width="2.21" height="2.85" fill="#450000"/><rect x="910.34" y="187.53" width="2.21" height="2.85" fill="#730000"/><rect x="912.25" y="187.53" width="2.21" height="2.85" fill="#cd0000"/><rect x="914.16" y="187.53" width="2.21" height="2.85" fill="#ff220b"/><rect x="916.06" y="187.53" width="2.21" height="2.85" fill="#cb0000"/><rect x="917.97" y="187.53" width="2.21" height="2.85" fill="#a20000"/><rect x="919.88" y="187.53" width="2.21" height="2.85" fill="#900000"/><rect x="921.78" y="187.53" width="2.21" height="2.85" fill="#c40000"/><rect x="923.69" y="187.53" width="2.21" height="2.85" fill="#550000"/><rect x="925.59" y="187.53" width="2.21" height="2.85" fill="#370000"/><rect x="927.50" y="187.53" width="2.21" height="2.85" fill="#3a0000"/><rect x="929.41" y="187.53" width="2.21" height="2.85" fill="#1e0000"/><rect x="935.12" y="187.53" width="2.21" height="2.85" fill="#060000"/><rect x="946.56" y="187.53" width="2.21" height="2.85" fill="#090000"/><rect x="870.31" y="190.09" width="2.21" height="2.85" fill="#080000"/><rect x="877.94" y="190.09" width="2.21" height="2.85" fill="#070000"/><rect x="883.66" y="190.09" width="2.21" height="2.85" fill="#120000"/><rect x="885.56" y="190.09" width="2.21" height="2.85" fill="#1c0000"/><rect x="887.47" y="190.09" width="2.21" height="2.85" fill="#760000"/><rect x="889.38" y="190.09" width="2.21" height="2.85" fill="#ac0000"/><rect x="891.28" y="190.09" width="2.21" height="2.85" fill="#ce0000"/><rect x="893.19" y="190.09" width="2.21" height="2.85" fill="#ff0802"/><rect x="895.09" y="190.09" width="2.21" height="2.85" fill="#ff1a08"/><rect x="897.00" y="190.09" width="2.21" height="2.85" fill="#e10000"/><rect x="898.91" y="190.09" width="2.21" height="2.85" fill="#ff0f05"/><rect x="900.81" y="190.09" width="2.21" height="2.85" fill="#ff210b"/><rect x="902.72" y="190.09" width="2.21" height="2.85" fill="#de0000"/><rect x="904.62" y="190.09" width="2.21" height="2.85" fill="#ff1707"/><rect x="906.53" y="190.09" width="2.21" height="2.85" fill="#e40000"/><rect x="908.44" y="190.09" width="2.21" height="2.85" fill="#c90000"/><rect x="910.34" y="190.09" width="2.21" height="2.85" fill="#e30000"/><rect x="912.25" y="190.09" width="2.21" height="2.85" fill="#ff200a"/><rect x="914.16" y="190.09" width="2.21" height="2.85" fill="#ff0802"/><rect x="916.06" y="190.09" width="2.21" height="2.85" fill="#ff0802"/><rect x="917.97" y="190.09" width="2.21" height="2.85" fill="#ef0000"/><rect x="919.88" y="190.09" width="2.21" height="2.85" fill="#ff0401"/><rect x="921.78" y="190.09" width="2.21" height="2.85" fill="#c70000"/><rect x="923.69" y="190.09" width="2.21" height="2.85" fill="#ff1507"/><rect x="925.59" y="190.09" width="2.21" height="2.85" fill="#a60000"/><rect x="927.50" y="190.09" width="2.21" height="2.85" fill="#660000"/><rect x="929.41" y="190.09" width="2.21" height="2.85" fill="#400000"/><rect x="931.31" y="190.09" width="2.21" height="2.85" fill="#1b0000"/><rect x="937.03" y="190.09" width="2.21" height="2.85" fill="#0e0000"/><rect x="940.84" y="190.09" width="2.21" height="2.85" fill="#080000"/><rect x="799.78" y="192.64" width="2.21" height="2.85" fill="#1b0000"/><rect x="877.94" y="192.64" width="2.21" height="2.85" fill="#0a0000"/><rect x="881.75" y="192.64" width="2.21" height="2.85" fill="#410000"/><rect x="883.66" y="192.64" width="2.21" height="2.85" fill="#650000"/><rect x="885.56" y="192.64" width="2.21" height="2.85" fill="#940000"/><rect x="887.47" y="192.64" width="2.21" height="2.85" fill="#a50000"/><rect x="889.38" y="192.64" width="2.21" height="2.85" fill="#ff1406"/><rect x="891.28" y="192.64" width="2.21" height="2.85" fill="#ff210b"/><rect x="893.19" y="192.64" width="2.21" height="2.85" fill="#fc0000"/><rect x="895.09" y="192.64" width="2.21" height="2.85" fill="#fe0000"/><rect x="897.00" y="192.64" width="2.21" height="2.85" fill="#ff240c"/><rect x="898.91" y="192.64" width="2.21" height="2.85" fill="#ff3a13"/><rect x="900.81" y="192.64" width="2.21" height="2.85" fill="#ff3010"/><rect x="902.72" y="192.64" width="2.21" height="2.85" fill="#ff571d"/><rect x="904.62" y="192.64" width="2.21" height="2.85" fill="#ff1f0a"/><rect x="906.53" y="192.64" width="2.21" height="2.85" fill="#e30000"/><rect x="908.44" y="192.64" width="2.21" height="2.85" fill="#e10000"/><rect x="910.34" y="192.64" width="2.21" height="2.85" fill="#ff1808"/><rect x="912.25" y="192.64" width="2.21" height="2.85" fill="#ff3612"/><rect x="914.16" y="192.64" width="2.21" height="2.85" fill="#ff240c"/><rect x="916.06" y="192.64" width="2.21" height="2.85" fill="#ff3b13"/><rect x="917.97" y="192.64" width="2.21" height="2.85" fill="#ff1707"/><rect x="919.88" y="192.64" width="2.21" height="2.85" fill="#ff240c"/><rect x="921.78" y="192.64" width="2.21" height="2.85" fill="#ff2b0e"/><rect x="923.69" y="192.64" width="2.21" height="2.85" fill="#d10000"/><rect x="925.59" y="192.64" width="2.21" height="2.85" fill="#f50000"/><rect x="927.50" y="192.64" width="2.21" height="2.85" fill="#e40000"/><rect x="929.41" y="192.64" width="2.21" height="2.85" fill="#a00000"/><rect x="931.31" y="192.64" width="2.21" height="2.85" fill="#5b0000"/><rect x="933.22" y="192.64" width="2.21" height="2.85" fill="#1c0000"/><rect x="946.56" y="192.64" width="2.21" height="2.85" fill="#070000"/><rect x="1020.91" y="192.64" width="2.21" height="2.85" fill="#0e0000"/><rect x="1057.12" y="192.64" width="2.21" height="2.85" fill="#090000"/><rect x="876.03" y="195.19" width="2.21" height="2.85" fill="#0f0000"/><rect x="877.94" y="195.19" width="2.21" height="2.85" fill="#240000"/><rect x="879.84" y="195.19" width="2.21" height="2.85" fill="#250000"/><rect x="881.75" y="195.19" width="2.21" height="2.85" fill="#440000"/><rect x="883.66" y="195.19" width="2.21" height="2.85" fill="#940000"/><rect x="885.56" y="195.19" width="2.21" height="2.85" fill="#ec0000"/><rect x="887.47" y="195.19" width="2.21" height="2.85" fill="#ff2a0e"/><rect x="889.38" y="195.19" width="2.21" height="2.85" fill="#ff0f05"/><rect x="891.28" y="195.19" width="2.21" height="2.85" fill="#ff0401"/><rect x="893.19" y="195.19" width="2.21" height="2.85" fill="#ff260c"/><rect x="895.09" y="195.19" width="2.21" height="2.85" fill="#ff4a18"/><rect x="897.00" y="195.19" width="2.21" height="2.85" fill="#ff6722"/><rect x="898.91" y="195.19" width="2.21" height="2.85" fill="#ff3511"/><rect x="900.81" y="195.19" width="2.21" height="2.85" fill="#ff3511"/><rect x="902.72" y="195.19" width="2.21" height="2.85" fill="#ff0d04"/><rect x="904.62" y="195.19" width="2.21" height="2.85" fill="#ff1607"/><rect x="906.53" y="195.19" width="2.21" height="2.85" fill="#ff1b09"/><rect x="908.44" y="195.19" width="2.21" height="2.85" fill="#f30000"/><rect x="910.34" y="195.19" width="2.21" height="2.85" fill="#fb0000"/><rect x="912.25" y="195.19" width="2.21" height="2.85" fill="#ff1d09"/><rect x="914.16" y="195.19" width="2.21" height="2.85" fill="#ff0802"/><rect x="916.06" y="195.19" width="2.21" height="2.85" fill="#ff4617"/><rect x="917.97" y="195.19" width="2.21" height="2.85" fill="#ff3311"/><rect x="919.88" y="195.19" width="2.21" height="2.85" fill="#fe0000"/><rect x="921.78" y="195.19" width="2.21" height="2.85" fill="#ff3411"/><rect x="923.69" y="195.19" width="2.21" height="2.85" fill="#ff1d09"/><rect x="925.59" y="195.19" width="2.21" height="2.85" fill="#ff2a0e"/><rect x="927.50" y="195.19" width="2.21" height="2.85" fill="#ea0000"/><rect x="929.41" y="195.19" width="2.21" height="2.85" fill="#a50000"/><rect x="931.31" y="195.19" width="2.21" height="2.85" fill="#c70000"/><rect x="933.22" y="195.19" width="2.21" height="2.85" fill="#630000"/><rect x="935.12" y="195.19" width="2.21" height="2.85" fill="#360000"/><rect x="937.03" y="195.19" width="2.21" height="2.85" fill="#0d0000"/><rect x="938.94" y="195.19" width="2.21" height="2.85" fill="#060000"/><rect x="992.31" y="195.19" width="2.21" height="2.85" fill="#070000"/><rect x="828.38" y="197.75" width="2.21" height="2.85" fill="#180000"/><rect x="876.03" y="197.75" width="2.21" height="2.85" fill="#060000"/><rect x="877.94" y="197.75" width="2.21" height="2.85" fill="#350000"/><rect x="879.84" y="197.75" width="2.21" height="2.85" fill="#6d0000"/><rect x="881.75" y="197.75" width="2.21" height="2.85" fill="#cb0000"/><rect x="883.66" y="197.75" width="2.21" height="2.85" fill="#ff0e04"/><rect x="885.56" y="197.75" width="2.21" height="2.85" fill="#ff4918"/><rect x="887.47" y="197.75" width="2.21" height="2.85" fill="#ff1c09"/><rect x="889.38" y="197.75" width="2.21" height="2.85" fill="#ff7426"/><rect x="891.28" y="197.75" width="2.21" height="2.85" fill="#ff561c"/><rect x="893.19" y="197.75" width="2.21" height="2.85" fill="#ff5a1e"/><rect x="895.09" y="197.75" width="2.21" height="2.85" fill="#ff6b23"/><rect x="897.00" y="197.75" width="2.21" height="2.85" fill="#ff260c"/><rect x="898.91" y="197.75" width="2.21" height="2.85" fill="#ff1005"/><rect x="900.81" y="197.75" width="2.21" height="2.85" fill="#ff230b"/><rect x="902.72" y="197.75" width="2.21" height="2.85" fill="#ff3010"/><rect x="904.62" y="197.75" width="2.21" height="2.85" fill="#ff3913"/><rect x="906.53" y="197.75" width="2.21" height="2.85" fill="#ff3311"/><rect x="908.44" y="197.75" width="2.21" height="2.85" fill="#ff0a03"/><rect x="910.34" y="197.75" width="2.21" height="2.85" fill="#ff3e14"/><rect x="912.25" y="197.75" width="2.21" height="2.85" fill="#e20000"/><rect x="914.16" y="197.75" width="2.21" height="2.85" fill="#f50000"/><rect x="916.06" y="197.75" width="2.21" height="2.85" fill="#ff4517"/><rect x="917.97" y="197.75" width="2.21" height="2.85" fill="#ff3612"/><rect x="919.88" y="197.75" width="2.21" height="2.85" fill="#ff1a08"/><rect x="921.78" y="197.75" width="2.21" height="2.85" fill="#d80000"/><rect x="923.69" y="197.75" width="2.21" height="2.85" fill="#c70000"/><rect x="925.59" y="197.75" width="2.21" height="2.85" fill="#ff210b"/><rect x="927.50" y="197.75" width="2.21" height="2.85" fill="#fd0000"/><rect x="929.41" y="197.75" width="2.21" height="2.85" fill="#ea0000"/><rect x="931.31" y="197.75" width="2.21" height="2.85" fill="#c60000"/><rect x="933.22" y="197.75" width="2.21" height="2.85" fill="#860000"/><rect x="935.12" y="197.75" width="2.21" height="2.85" fill="#5a0000"/><rect x="937.03" y="197.75" width="2.21" height="2.85" fill="#1e0000"/><rect x="940.84" y="197.75" width="2.21" height="2.85" fill="#120000"/><rect x="841.72" y="200.31" width="2.21" height="2.85" fill="#0b0000"/><rect x="868.41" y="200.31" width="2.21" height="2.85" fill="#070000"/><rect x="877.94" y="200.31" width="2.21" height="2.85" fill="#3b0000"/><rect x="879.84" y="200.31" width="2.21" height="2.85" fill="#9c0000"/><rect x="881.75" y="200.31" width="2.21" height="2.85" fill="#ff0501"/><rect x="883.66" y="200.31" width="2.21" height="2.85" fill="#ff4918"/><rect x="885.56" y="200.31" width="2.21" height="2.85" fill="#ff200a"/><rect x="887.47" y="200.31" width="2.21" height="2.85" fill="#ff6220"/><rect x="889.38" y="200.31" width="2.21" height="2.85" fill="#ff4316"/><rect x="891.28" y="200.31" width="2.21" height="2.85" fill="#ff9b34"/><rect x="893.19" y="200.31" width="2.21" height="2.85" fill="#ff6120"/><rect x="895.09" y="200.31" width="2.21" height="2.85" fill="#ff4316"/><rect x="897.00" y="200.31" width="2.21" height="2.85" fill="#ff1908"/><rect x="898.91" y="200.31" width="2.21" height="2.85" fill="#ff6321"/><rect x="900.81" y="200.31" width="2.21" height="2.85" fill="#ff1005"/><rect x="902.72" y="200.31" width="2.21" height="2.85" fill="#ff240c"/><rect x="904.62" y="200.31" width="2.21" height="2.85" fill="#ff4d19"/><rect x="906.53" y="200.31" width="2.21" height="2.85" fill="#ff7627"/><rect x="908.44" y="200.31" width="2.21" height="2.85" fill="#fc0000"/><rect x="910.34" y="200.31" width="2.21" height="2.85" fill="#ff0903"/><rect x="912.25" y="200.31" width="2.21" height="2.85" fill="#ff270d"/><rect x="914.16" y="200.31" width="2.21" height="2.85" fill="#ff3712"/><rect x="916.06" y="200.31" width="2.21" height="2.85" fill="#ff0f05"/><rect x="917.97" y="200.31" width="2.21" height="2.85" fill="#ff3010"/><rect x="919.88" y="200.31" width="2.21" height="2.85" fill="#ff0501"/><rect x="921.78" y="200.31" width="2.21" height="2.85" fill="#ff2f0f"/><rect x="923.69" y="200.31" width="2.21" height="2.85" fill="#ff4416"/><rect x="925.59" y="200.31" width="2.21" height="2.85" fill="#ff4b19"/><rect x="927.50" y="200.31" width="2.21" height="2.85" fill="#ff3812"/><rect x="929.41" y="200.31" width="2.21" height="2.85" fill="#ff250c"/><rect x="931.31" y="200.31" width="2.21" height="2.85" fill="#ed0000"/><rect x="933.22" y="200.31" width="2.21" height="2.85" fill="#c50000"/><rect x="935.12" y="200.31" width="2.21" height="2.85" fill="#ba0000"/><rect x="937.03" y="200.31" width="2.21" height="2.85" fill="#5f0000"/><rect x="938.94" y="200.31" width="2.21" height="2.85" fill="#230000"/><rect x="967.53" y="200.31" width="2.21" height="2.85" fill="#140000"/><rect x="856.97" y="202.86" width="2.21" height="2.85" fill="#180000"/><rect x="868.41" y="202.86" width="2.21" height="2.85" fill="#070000"/><rect x="874.12" y="202.86" width="2.21" height="2.85" fill="#200000"/><rect x="876.03" y="202.86" width="2.21" height="2.85" fill="#110000"/><rect x="877.94" y="202.86" width="2.21" height="2.85" fill="#580000"/><rect x="879.84" y="202.86" width="2.21" height="2.85" fill="#cf0000"/><rect x="881.75" y="202.86" width="2.21" height="2.85" fill="#ff3913"/><rect x="883.66" y="202.86" width="2.21" height="2.85" fill="#ff1f0a"/><rect x="885.56" y="202.86" width="2.21" height="2.85" fill="#ff4a18"/><rect x="887.47" y="202.86" width="2.21" height="2.85" fill="#ff6421"/><rect x="889.38" y="202.86" width="2.21" height="2.85" fill="#ff9b34"/><rect x="891.28" y="202.86" width="2.21" height="2.85" fill="#ff9632"/><rect x="893.19" y="202.86" width="2.21" height="2.85" fill="#ff6120"/><rect x="895.09" y="202.86" width="2.21" height="2.85" fill="#ff7e2a"/><rect x="897.00" y="202.86" width="2.21" height="2.85" fill="#ff6e24"/><rect x="898.91" y="202.86" width="2.21" height="2.85" fill="#ff4517"/><rect x="900.81" y="202.86" width="2.21" height="2.85" fill="#ff6e24"/><rect x="902.72" y="202.86" width="2.21" height="2.85" fill="#ff200a"/><rect x="904.62" y="202.86" width="2.21" height="2.85" fill="#ff1b09"/><rect x="906.53" y="202.86" width="2.21" height="2.85" fill="#ff4f1a"/><rect x="908.44" y="202.86" width="2.21" height="2.85" fill="#ff0c04"/><rect x="910.34" y="202.86" width="2.21" height="2.85" fill="#ff6722"/><rect x="912.25" y="202.86" width="2.21" height="2.85" fill="#ff1105"/><rect x="914.16" y="202.86" width="2.21" height="2.85" fill="#ff591d"/><rect x="916.06" y="202.86" width="2.21" height="2.85" fill="#fd0000"/><rect x="917.97" y="202.86" width="2.21" height="2.85" fill="#ff4918"/><rect x="919.88" y="202.86" width="2.21" height="2.85" fill="#ff0a03"/><rect x="921.78" y="202.86" width="2.21" height="2.85" fill="#ff4918"/><rect x="923.69" y="202.86" width="2.21" height="2.85" fill="#ff280d"/><rect x="925.59" y="202.86" width="2.21" height="2.85" fill="#ff0a03"/><rect x="927.50" y="202.86" width="2.21" height="2.85" fill="#ff4e1a"/><rect x="929.41" y="202.86" width="2.21" height="2.85" fill="#ff3812"/><rect x="931.31" y="202.86" width="2.21" height="2.85" fill="#ff3f15"/><rect x="933.22" y="202.86" width="2.21" height="2.85" fill="#ff1c09"/><rect x="935.12" y="202.86" width="2.21" height="2.85" fill="#880000"/><rect x="937.03" y="202.86" width="2.21" height="2.85" fill="#5f0000"/><rect x="938.94" y="202.86" width="2.21" height="2.85" fill="#380000"/><rect x="940.84" y="202.86" width="2.21" height="2.85" fill="#1d0000"/><rect x="1060.94" y="202.86" width="2.21" height="2.85" fill="#190000"/><rect x="818.84" y="205.42" width="2.21" height="2.85" fill="#0b0000"/><rect x="853.16" y="205.42" width="2.21" height="2.85" fill="#1b0000"/><rect x="874.12" y="205.42" width="2.21" height="2.85" fill="#0a0000"/><rect x="876.03" y="205.42" width="2.21" height="2.85" fill="#260000"/><rect x="877.94" y="205.42" width="2.21" height="2.85" fill="#6d0000"/><rect x="879.84" y="205.42" width="2.21" height="2.85" fill="#f90000"/><rect x="881.75" y="205.42" width="2.21" height="2.85" fill="#ff4517"/><rect x="883.66" y="205.42" width="2.21" height="2.85" fill="#ff4a18"/><rect x="885.56" y="205.42" width="2.21" height="2.85" fill="#ff812b"/><rect x="887.47" y="205.42" width="2.21" height="2.85" fill="#ff5a1e"/><rect x="889.38" y="205.42" width="2.21" height="2.85" fill="#ff6521"/><rect x="891.28" y="205.42" width="2.21" height="2.85" fill="#ff7828"/><rect x="893.19" y="205.42" width="2.21" height="2.85" fill="#ff501a"/><rect x="895.09" y="205.42" width="2.21" height="2.85" fill="#ff3812"/><rect x="897.00" y="205.42" width="2.21" height="2.85" fill="#ff9c35"/><rect x="898.91" y="205.42" width="2.21" height="2.85" fill="#ff7f2a"/><rect x="900.81" y="205.42" width="2.21" height="2.85" fill="#ff6120"/><rect x="902.72" y="205.42" width="2.21" height="2.85" fill="#ff6120"/><rect x="904.62" y="205.42" width="2.21" height="2.85" fill="#ff521b"/><rect x="906.53" y="205.42" width="2.21" height="2.85" fill="#ff2c0e"/><rect x="908.44" y="205.42" width="2.21" height="2.85" fill="#ff6923"/><rect x="910.34" y="205.42" width="2.21" height="2.85" fill="#ff250c"/><rect x="912.25" y="205.42" width="2.21" height="2.85" fill="#ff1a08"/><rect x="914.16" y="205.42" width="2.21" height="2.85" fill="#ff2c0e"/><rect x="916.06" y="205.42" width="2.21" height="2.85" fill="#ff0501"/><rect x="917.97" y="205.42" width="2.21" height="2.85" fill="#ff0e04"/><rect x="919.88" y="205.42" width="2.21" height="2.85" fill="#ff220b"/><rect x="921.78" y="205.42" width="2.21" height="2.85" fill="#ff0802"/><rect x="923.69" y="205.42" width="2.21" height="2.85" fill="#ff3110"/><rect x="925.59" y="205.42" width="2.21" height="2.85" fill="#e80000"/><rect x="927.50" y="205.42" width="2.21" height="2.85" fill="#f80000"/><rect x="929.41" y="205.42" width="2.21" height="2.85" fill="#ff501a"/><rect x="931.31" y="205.42" width="2.21" height="2.85" fill="#ff250c"/><rect x="933.22" y="205.42" width="2.21" height="2.85" fill="#df0000"/><rect x="935.12" y="205.42" width="2.21" height="2.85" fill="#dd0000"/><rect x="937.03" y="205.42" width="2.21" height="2.85" fill="#5a0000"/><rect x="938.94" y="205.42" width="2.21" height="2.85" fill="#3e0000"/><rect x="940.84" y="205.42" width="2.21" height="2.85" fill="#0a0000"/><rect x="866.50" y="207.97" width="2.21" height="2.85" fill="#0a0000"/><rect x="872.22" y="207.97" width="2.21" height="2.85" fill="#0d0000"/><rect x="876.03" y="207.97" width="2.21" height="2.85" fill="#340000"/><rect x="877.94" y="207.97" width="2.21" height="2.85" fill="#940000"/><rect x="879.84" y="207.97" width="2.21" height="2.85" fill="#ff260c"/><rect x="881.75" y="207.97" width="2.21" height="2.85" fill="#ff6f25"/><rect x="883.66" y="207.97" width="2.21" height="2.85" fill="#ff6f25"/><rect x="885.56" y="207.97" width="2.21" height="2.85" fill="#ff852c"/><rect x="887.47" y="207.97" width="2.21" height="2.85" fill="#ff7025"/><rect x="889.38" y="207.97" width="2.21" height="2.85" fill="#ff892d"/><rect x="891.28" y="207.97" width="2.21" height="2.85" fill="#ff6a23"/><rect x="893.19" y="207.97" width="2.21" height="2.85" fill="#ff9230"/><rect x="895.09" y="207.97" width="2.21" height="2.85" fill="#ff7527"/><rect x="897.00" y="207.97" width="2.21" height="2.85" fill="#ff8a2e"/><rect x="898.91" y="207.97" width="2.21" height="2.85" fill="#ffa538"/><rect x="900.81" y="207.97" width="2.21" height="2.85" fill="#ff7f2a"/><rect x="902.72" y="207.97" width="2.21" height="2.85" fill="#ff1f0a"/><rect x="904.62" y="207.97" width="2.21" height="2.85" fill="#ff521b"/><rect x="906.53" y="207.97" width="2.21" height="2.85" fill="#ff571d"/><rect x="908.44" y="207.97" width="2.21" height="2.85" fill="#ff4f1a"/><rect x="910.34" y="207.97" width="2.21" height="2.85" fill="#ff7426"/><rect x="912.25" y="207.97" width="2.21" height="2.85" fill="#ff3a13"/><rect x="914.16" y="207.97" width="2.21" height="2.85" fill="#ff802a"/><rect x="916.06" y="207.97" width="2.21" height="2.85" fill="#ff270d"/><rect x="917.97" y="207.97" width="2.21" height="2.85" fill="#ff3d14"/><rect x="919.88" y="207.97" width="2.21" height="2.85" fill="#ff0602"/><rect x="921.78" y="207.97" width="2.21" height="2.85" fill="#ff0d04"/><rect x="923.69" y="207.97" width="2.21" height="2.85" fill="#ff1b09"/><rect x="925.59" y="207.97" width="2.21" height="2.85" fill="#ff5c1e"/><rect x="927.50" y="207.97" width="2.21" height="2.85" fill="#ff4115"/><rect x="929.41" y="207.97" width="2.21" height="2.85" fill="#ff3210"/><rect x="931.31" y="207.97" width="2.21" height="2.85" fill="#ff4416"/><rect x="933.22" y="207.97" width="2.21" height="2.85" fill="#f40000"/><rect x="935.12" y="207.97" width="2.21" height="2.85" fill="#c60000"/><rect x="937.03" y="207.97" width="2.21" height="2.85" fill="#5e0000"/><rect x="938.94" y="207.97" width="2.21" height="2.85" fill="#220000"/><rect x="874.12" y="210.53" width="2.21" height="2.85" fill="#130000"/><rect x="876.03" y="210.53" width="2.21" height="2.85" fill="#380000"/><rect x="877.94" y="210.53" width="2.21" height="2.85" fill="#6f0000"/><rect x="879.84" y="210.53" width="2.21" height="2.85" fill="#f20000"/><rect x="881.75" y="210.53" width="2.21" height="2.85" fill="#ff4a18"/><rect x="883.66" y="210.53" width="2.21" height="2.85" fill="#ff6a23"/><rect x="885.56" y="210.53" width="2.21" height="2.85" fill="#ff5e1f"/><rect x="887.47" y="210.53" width="2.21" height="2.85" fill="#ff882d"/><rect x="889.38" y="210.53" width="2.21" height="2.85" fill="#ff551c"/><rect x="891.28" y="210.53" width="2.21" height="2.85" fill="#ffb63f"/><rect x="893.19" y="210.53" width="2.21" height="2.85" fill="#ff6923"/><rect x="895.09" y="210.53" width="2.21" height="2.85" fill="#ff832b"/><rect x="897.00" y="210.53" width="2.21" height="2.85" fill="#ff5d1f"/><rect x="898.91" y="210.53" width="2.21" height="2.85" fill="#ff6722"/><rect x="900.81" y="210.53" width="2.21" height="2.85" fill="#ff7426"/><rect x="902.72" y="210.53" width="2.21" height="2.85" fill="#ff521b"/><rect x="904.62" y="210.53" width="2.21" height="2.85" fill="#ff561c"/><rect x="906.53" y="210.53" width="2.21" height="2.85" fill="#ff3a13"/><rect x="908.44" y="210.53" width="2.21" height="2.85" fill="#ff551c"/><rect x="910.34" y="210.53" width="2.21" height="2.85" fill="#ff4216"/><rect x="912.25" y="210.53" width="2.21" height="2.85" fill="#ff3110"/><rect x="914.16" y="210.53" width="2.21" height="2.85" fill="#ff1c09"/><rect x="916.06" y="210.53" width="2.21" height="2.85" fill="#ff3d14"/><rect x="917.97" y="210.53" width="2.21" height="2.85" fill="#ff571d"/><rect x="919.88" y="210.53" width="2.21" height="2.85" fill="#ff0702"/><rect x="921.78" y="210.53" width="2.21" height="2.85" fill="#ff1f0a"/><rect x="923.69" y="210.53" width="2.21" height="2.85" fill="#ff3b13"/><rect x="925.59" y="210.53" width="2.21" height="2.85" fill="#ff0903"/><rect x="927.50" y="210.53" width="2.21" height="2.85" fill="#ff2e0f"/><rect x="929.41" y="210.53" width="2.21" height="2.85" fill="#ff2c0e"/><rect x="931.31" y="210.53" width="2.21" height="2.85" fill="#ff0602"/><rect x="933.22" y="210.53" width="2.21" height="2.85" fill="#ff1908"/><rect x="935.12" y="210.53" width="2.21" height="2.85" fill="#bb0000"/><rect x="937.03" y="210.53" width="2.21" height="2.85" fill="#6a0000"/><rect x="938.94" y="210.53" width="2.21" height="2.85" fill="#290000"/><rect x="942.75" y="210.53" width="2.21" height="2.85" fill="#060000"/><rect x="965.62" y="210.53" width="2.21" height="2.85" fill="#0d0000"/><rect x="874.12" y="213.08" width="2.21" height="2.85" fill="#090000"/><rect x="876.03" y="213.08" width="2.21" height="2.85" fill="#3b0000"/><rect x="877.94" y="213.08" width="2.21" height="2.85" fill="#4a0000"/><rect x="879.84" y="213.08" width="2.21" height="2.85" fill="#ae0000"/><rect x="881.75" y="213.08" width="2.21" height="2.85" fill="#ff1306"/><rect x="883.66" y="213.08" width="2.21" height="2.85" fill="#ff8d2f"/><rect x="885.56" y="213.08" width="2.21" height="2.85" fill="#ffb43e"/><rect x="887.47" y="213.08" width="2.21" height="2.85" fill="#ff9e35"/><rect x="889.38" y="213.08" width="2.21" height="2.85" fill="#ffae3c"/><rect x="891.28" y="213.08" width="2.21" height="2.85" fill="#ffa438"/><rect x="893.19" y="213.08" width="2.21" height="2.85" fill="#ff9833"/><rect x="895.09" y="213.08" width="2.21" height="2.85" fill="#ff882d"/><rect x="897.00" y="213.08" width="2.21" height="2.85" fill="#ff842c"/><rect x="898.91" y="213.08" width="2.21" height="2.85" fill="#ff6822"/><rect x="900.81" y="213.08" width="2.21" height="2.85" fill="#ff9f36"/><rect x="902.72" y="213.08" width="2.21" height="2.85" fill="#ff3c14"/><rect x="904.62" y="213.08" width="2.21" height="2.85" fill="#ff7627"/><rect x="906.53" y="213.08" width="2.21" height="2.85" fill="#ff7125"/><rect x="908.44" y="213.08" width="2.21" height="2.85" fill="#ff5c1e"/><rect x="910.34" y="213.08" width="2.21" height="2.85" fill="#ff3411"/><rect x="912.25" y="213.08" width="2.21" height="2.85" fill="#ff3712"/><rect x="914.16" y="213.08" width="2.21" height="2.85" fill="#ff5c1e"/><rect x="916.06" y="213.08" width="2.21" height="2.85" fill="#ff3913"/><rect x="917.97" y="213.08" width="2.21" height="2.85" fill="#ff6f25"/><rect x="919.88" y="213.08" width="2.21" height="2.85" fill="#ff270d"/><rect x="921.78" y="213.08" width="2.21" height="2.85" fill="#ff3311"/><rect x="923.69" y="213.08" width="2.21" height="2.85" fill="#ff3f15"/><rect x="925.59" y="213.08" width="2.21" height="2.85" fill="#ff531b"/><rect x="927.50" y="213.08" width="2.21" height="2.85" fill="#ff280d"/><rect x="929.41" y="213.08" width="2.21" height="2.85" fill="#ff0702"/><rect x="931.31" y="213.08" width="2.21" height="2.85" fill="#ff0a03"/><rect x="933.22" y="213.08" width="2.21" height="2.85" fill="#a40000"/><rect x="935.12" y="213.08" width="2.21" height="2.85" fill="#980000"/><rect x="937.03" y="213.08" width="2.21" height="2.85" fill="#460000"/><rect x="938.94" y="213.08" width="2.21" height="2.85" fill="#320000"/><rect x="946.56" y="213.08" width="2.21" height="2.85" fill="#070000"/><rect x="876.03" y="215.64" width="2.21" height="2.85" fill="#0d0000"/><rect x="877.94" y="215.64" width="2.21" height="2.85" fill="#4f0000"/><rect x="879.84" y="215.64" width="2.21" height="2.85" fill="#950000"/><rect x="881.75" y="215.64" width="2.21" height="2.85" fill="#ff0401"/><rect x="883.66" y="215.64" width="2.21" height="2.85" fill="#ff6622"/><rect x="885.56" y="215.64" width="2.21" height="2.85" fill="#ff8f2f"/><rect x="887.47" y="215.64" width="2.21" height="2.85" fill="#ffc444"/><rect x="889.38" y="215.64" width="2.21" height="2.85" fill="#ffc746"/><rect x="891.28" y="215.64" width="2.21" height="2.85" fill="#ff9030"/><rect x="893.19" y="215.64" width="2.21" height="2.85" fill="#ff9e35"/><rect x="895.09" y="215.64" width="2.21" height="2.85" fill="#ffaf3c"/><rect x="897.00" y="215.64" width="2.21" height="2.85" fill="#ff9431"/><rect x="898.91" y="215.64" width="2.21" height="2.85" fill="#ffc244"/><rect x="900.81" y="215.64" width="2.21" height="2.85" fill="#ff9331"/><rect x="902.72" y="215.64" width="2.21" height="2.85" fill="#ffa438"/><rect x="904.62" y="215.64" width="2.21" height="2.85" fill="#ff4c19"/><rect x="906.53" y="215.64" width="2.21" height="2.85" fill="#ff5f1f"/><rect x="908.44" y="215.64" width="2.21" height="2.85" fill="#ff5d1f"/><rect x="910.34" y="215.64" width="2.21" height="2.85" fill="#ff3a13"/><rect x="912.25" y="215.64" width="2.21" height="2.85" fill="#ff6120"/><rect x="914.16" y="215.64" width="2.21" height="2.85" fill="#ff4015"/><rect x="916.06" y="215.64" width="2.21" height="2.85" fill="#ff1d09"/><rect x="917.97" y="215.64" width="2.21" height="2.85" fill="#ff6c24"/><rect x="919.88" y="215.64" width="2.21" height="2.85" fill="#ff4818"/><rect x="921.78" y="215.64" width="2.21" height="2.85" fill="#ff3511"/><rect x="923.69" y="215.64" width="2.21" height="2.85" fill="#ff1005"/><rect x="925.59" y="215.64" width="2.21" height="2.85" fill="#ff6923"/><rect x="927.50" y="215.64" width="2.21" height="2.85" fill="#ff5e1f"/><rect x="929.41" y="215.64" width="2.21" height="2.85" fill="#e10000"/><rect x="931.31" y="215.64" width="2.21" height="2.85" fill="#df0000"/><rect x="933.22" y="215.64" width="2.21" height="2.85" fill="#c30000"/><rect x="935.12" y="215.64" width="2.21" height="2.85" fill="#770000"/><rect x="937.03" y="215.64" width="2.21" height="2.85" fill="#3b0000"/><rect x="938.94" y="215.64" width="2.21" height="2.85" fill="#1c0000"/><rect x="940.84" y="215.64" width="2.21" height="2.85" fill="#0c0000"/><rect x="876.03" y="218.19" width="2.21" height="2.85" fill="#180000"/><rect x="877.94" y="218.19" width="2.21" height="2.85" fill="#0c0000"/><rect x="879.84" y="218.19" width="2.21" height="2.85" fill="#680000"/><rect x="881.75" y="218.19" width="2.21" height="2.85" fill="#d20000"/><rect x="883.66" y="218.19" width="2.21" height="2.85" fill="#ff280d"/><rect x="885.56" y="218.19" width="2.21" height="2.85" fill="#ff551c"/><rect x="887.47" y="218.19" width="2.21" height="2.85" fill="#ffc445"/><rect x="889.38" y="218.19" width="2.21" height="2.85" fill="#ffbc41"/><rect x="891.28" y="218.19" width="2.21" height="2.85" fill="#ffd74c"/><rect x="893.19" y="218.19" width="2.21" height="2.85" fill="#ff9a34"/><rect x="895.09" y="218.19" width="2.21" height="2.85" fill="#ffb33e"/><rect x="897.00" y="218.19" width="2.21" height="2.85" fill="#ff9b34"/><rect x="898.91" y="218.19" width="2.21" height="2.85" fill="#ffab3b"/><rect x="900.81" y="218.19" width="2.21" height="2.85" fill="#ff872d"/><rect x="902.72" y="218.19" width="2.21" height="2.85" fill="#ff5c1e"/><rect x="904.62" y="218.19" width="2.21" height="2.85" fill="#ff9b34"/><rect x="906.53" y="218.19" width="2.21" height="2.85" fill="#ffad3b"/><rect x="908.44" y="218.19" width="2.21" height="2.85" fill="#ff7426"/><rect x="910.34" y="218.19" width="2.21" height="2.85" fill="#ff2a0e"/><rect x="912.25" y="218.19" width="2.21" height="2.85" fill="#ffa036"/><rect x="914.16" y="218.19" width="2.21" height="2.85" fill="#ff892d"/><rect x="916.06" y="218.19" width="2.21" height="2.85" fill="#ff882d"/><rect x="917.97" y="218.19" width="2.21" height="2.85" fill="#ff6020"/><rect x="919.88" y="218.19" width="2.21" height="2.85" fill="#ff7c29"/><rect x="921.78" y="218.19" width="2.21" height="2.85" fill="#ff210b"/><rect x="923.69" y="218.19" width="2.21" height="2.85" fill="#ff1707"/><rect x="925.59" y="218.19" width="2.21" height="2.85" fill="#ff1e0a"/><rect x="927.50" y="218.19" width="2.21" height="2.85" fill="#ff0b03"/><rect x="929.41" y="218.19" width="2.21" height="2.85" fill="#ff3110"/><rect x="931.31" y="218.19" width="2.21" height="2.85" fill="#940000"/><rect x="933.22" y="218.19" width="2.21" height="2.85" fill="#800000"/><rect x="935.12" y="218.19" width="2.21" height="2.85" fill="#3c0000"/><rect x="937.03" y="218.19" width="2.21" height="2.85" fill="#250000"/><rect x="940.84" y="218.19" width="2.21" height="2.85" fill="#120000"/><rect x="942.75" y="218.19" width="2.21" height="2.85" fill="#0a0000"/><rect x="958.00" y="218.19" width="2.21" height="2.85" fill="#0c0000"/><rect x="786.44" y="220.75" width="2.21" height="2.85" fill="#090000"/><rect x="815.03" y="220.75" width="2.21" height="2.85" fill="#0a0000"/><rect x="877.94" y="220.75" width="2.21" height="2.85" fill="#0c0000"/><rect x="879.84" y="220.75" width="2.21" height="2.85" fill="#120000"/><rect x="881.75" y="220.75" width="2.21" height="2.85" fill="#580000"/><rect x="883.66" y="220.75" width="2.21" height="2.85" fill="#f20000"/><rect x="885.56" y="220.75" width="2.21" height="2.85" fill="#ff200a"/><rect x="887.47" y="220.75" width="2.21" height="2.85" fill="#ff5b1e"/><rect x="889.38" y="220.75" width="2.21" height="2.85" fill="#ffa638"/><rect x="891.28" y="220.75" width="2.21" height="2.85" fill="#ff7426"/><rect x="893.19" y="220.75" width="2.21" height="2.85" fill="#ffc043"/><rect x="895.09" y="220.75" width="2.21" height="2.85" fill="#ffab3b"/><rect x="897.00" y="220.75" width="2.21" height="2.85" fill="#ff822b"/><rect x="898.91" y="220.75" width="2.21" height="2.85" fill="#ff9532"/><rect x="900.81" y="220.75" width="2.21" height="2.85" fill="#ff9833"/><rect x="902.72" y="220.75" width="2.21" height="2.85" fill="#ff7928"/><rect x="904.62" y="220.75" width="2.21" height="2.85" fill="#ff7426"/><rect x="906.53" y="220.75" width="2.21" height="2.85" fill="#ffad3b"/><rect x="908.44" y="220.75" width="2.21" height="2.85" fill="#ff521b"/><rect x="910.34" y="220.75" width="2.21" height="2.85" fill="#ff9833"/><rect x="912.25" y="220.75" width="2.21" height="2.85" fill="#ff9c34"/><rect x="914.16" y="220.75" width="2.21" height="2.85" fill="#ff9b34"/><rect x="916.06" y="220.75" width="2.21" height="2.85" fill="#ff3210"/><rect x="917.97" y="220.75" width="2.21" height="2.85" fill="#ff6722"/><rect x="919.88" y="220.75" width="2.21" height="2.85" fill="#ff280d"/><rect x="921.78" y="220.75" width="2.21" height="2.85" fill="#ff812b"/><rect x="923.69" y="220.75" width="2.21" height="2.85" fill="#ff3311"/><rect x="925.59" y="220.75" width="2.21" height="2.85" fill="#ff4b19"/><rect x="927.50" y="220.75" width="2.21" height="2.85" fill="#ff1f0a"/><rect x="929.41" y="220.75" width="2.21" height="2.85" fill="#ff290d"/><rect x="931.31" y="220.75" width="2.21" height="2.85" fill="#c70000"/><rect x="933.22" y="220.75" width="2.21" height="2.85" fill="#570000"/><rect x="935.12" y="220.75" width="2.21" height="2.85" fill="#3f0000"/><rect x="937.03" y="220.75" width="2.21" height="2.85" fill="#280000"/><rect x="940.84" y="220.75" width="2.21" height="2.85" fill="#0a0000"/><rect x="942.75" y="220.75" width="2.21" height="2.85" fill="#070000"/><rect x="1001.84" y="220.75" width="2.21" height="2.85" fill="#080000"/><rect x="876.03" y="223.30" width="2.21" height="2.85" fill="#0d0000"/><rect x="881.75" y="223.30" width="2.21" height="2.85" fill="#210000"/><rect x="883.66" y="223.30" width="2.21" height="2.85" fill="#4d0000"/><rect x="885.56" y="223.30" width="2.21" height="2.85" fill="#a00000"/><rect x="887.47" y="223.30" width="2.21" height="2.85" fill="#ff1808"/><rect x="889.38" y="223.30" width="2.21" height="2.85" fill="#ff7928"/><rect x="891.28" y="223.30" width="2.21" height="2.85" fill="#ff7928"/><rect x="893.19" y="223.30" width="2.21" height="2.85" fill="#ff6923"/><rect x="895.09" y="223.30" width="2.21" height="2.85" fill="#ffb940"/><rect x="897.00" y="223.30" width="2.21" height="2.85" fill="#ff9b34"/><rect x="898.91" y="223.30" width="2.21" height="2.85" fill="#ffbd42"/><rect x="900.81" y="223.30" width="2.21" height="2.85" fill="#ffa93a"/><rect x="902.72" y="223.30" width="2.21" height="2.85" fill="#ff862c"/><rect x="904.62" y="223.30" width="2.21" height="2.85" fill="#ffa739"/><rect x="906.53" y="223.30" width="2.21" height="2.85" fill="#ff8f2f"/><rect x="908.44" y="223.30" width="2.21" height="2.85" fill="#ff6421"/><rect x="910.34" y="223.30" width="2.21" height="2.85" fill="#ff6020"/><rect x="912.25" y="223.30" width="2.21" height="2.85" fill="#ff8d2f"/><rect x="914.16" y="223.30" width="2.21" height="2.85" fill="#ff7b29"/><rect x="916.06" y="223.30" width="2.21" height="2.85" fill="#ff7f2a"/><rect x="917.97" y="223.30" width="2.21" height="2.85" fill="#ff8b2e"/><rect x="919.88" y="223.30" width="2.21" height="2.85" fill="#ff3210"/><rect x="921.78" y="223.30" width="2.21" height="2.85" fill="#ff6020"/><rect x="923.69" y="223.30" width="2.21" height="2.85" fill="#ff2e0f"/><rect x="925.59" y="223.30" width="2.21" height="2.85" fill="#ff1b09"/><rect x="927.50" y="223.30" width="2.21" height="2.85" fill="#ff0501"/><rect x="929.41" y="223.30" width="2.21" height="2.85" fill="#a80000"/><rect x="931.31" y="223.30" width="2.21" height="2.85" fill="#5d0000"/><rect x="933.22" y="223.30" width="2.21" height="2.85" fill="#450000"/><rect x="935.12" y="223.30" width="2.21" height="2.85" fill="#250000"/><rect x="1009.47" y="223.30" width="2.21" height="2.85" fill="#170000"/><rect x="782.62" y="225.86" width="2.21" height="2.85" fill="#1a0000"/><rect x="874.12" y="225.86" width="2.21" height="2.85" fill="#080000"/><rect x="883.66" y="225.86" width="2.21" height="2.85" fill="#190000"/><rect x="885.56" y="225.86" width="2.21" height="2.85" fill="#420000"/><rect x="887.47" y="225.86" width="2.21" height="2.85" fill="#960000"/><rect x="889.38" y="225.86" width="2.21" height="2.85" fill="#eb0000"/><rect x="891.28" y="225.86" width="2.21" height="2.85" fill="#ff3010"/><rect x="893.19" y="225.86" width="2.21" height="2.85" fill="#ff4f1a"/><rect x="895.09" y="225.86" width="2.21" height="2.85" fill="#ff7a28"/><rect x="897.00" y="225.86" width="2.21" height="2.85" fill="#ff852c"/><rect x="898.91" y="225.86" width="2.21" height="2.85" fill="#ffa438"/><rect x="900.81" y="225.86" width="2.21" height="2.85" fill="#ff9331"/><rect x="902.72" y="225.86" width="2.21" height="2.85" fill="#ffac3b"/><rect x="904.62" y="225.86" width="2.21" height="2.85" fill="#ffb33e"/><rect x="906.53" y="225.86" width="2.21" height="2.85" fill="#ff862c"/><rect x="908.44" y="225.86" width="2.21" height="2.85" fill="#ff7527"/><rect x="910.34" y="225.86" width="2.21" height="2.85" fill="#ffaf3c"/><rect x="912.25" y="225.86" width="2.21" height="2.85" fill="#ff6521"/><rect x="914.16" y="225.86" width="2.21" height="2.85" fill="#ff852c"/><rect x="916.06" y="225.86" width="2.21" height="2.85" fill="#ff591d"/><rect x="917.97" y="225.86" width="2.21" height="2.85" fill="#ff7828"/><rect x="919.88" y="225.86" width="2.21" height="2.85" fill="#ff3712"/><rect x="921.78" y="225.86" width="2.21" height="2.85" fill="#ff7727"/><rect x="923.69" y="225.86" width="2.21" height="2.85" fill="#ea0000"/><rect x="925.59" y="225.86" width="2.21" height="2.85" fill="#a00000"/><rect x="927.50" y="225.86" width="2.21" height="2.85" fill="#730000"/><rect x="929.41" y="225.86" width="2.21" height="2.85" fill="#720000"/><rect x="931.31" y="225.86" width="2.21" height="2.85" fill="#350000"/><rect x="944.66" y="225.86" width="2.21" height="2.85" fill="#090000"/><rect x="996.12" y="225.86" width="2.21" height="2.85" fill="#0b0000"/><rect x="1041.88" y="225.86" width="2.21" height="2.85" fill="#100000"/><rect x="881.75" y="228.41" width="2.21" height="2.85" fill="#100000"/><rect x="885.56" y="228.41" width="2.21" height="2.85" fill="#270000"/><rect x="887.47" y="228.41" width="2.21" height="2.85" fill="#390000"/><rect x="889.38" y="228.41" width="2.21" height="2.85" fill="#530000"/><rect x="891.28" y="228.41" width="2.21" height="2.85" fill="#970000"/><rect x="893.19" y="228.41" width="2.21" height="2.85" fill="#d80000"/><rect x="895.09" y="228.41" width="2.21" height="2.85" fill="#ff3712"/><rect x="897.00" y="228.41" width="2.21" height="2.85" fill="#ff4a18"/><rect x="898.91" y="228.41" width="2.21" height="2.85" fill="#ff4617"/><rect x="900.81" y="228.41" width="2.21" height="2.85" fill="#ff9130"/><rect x="902.72" y="228.41" width="2.21" height="2.85" fill="#ff7727"/><rect x="904.62" y="228.41" width="2.21" height="2.85" fill="#ff9f36"/><rect x="906.53" y="228.41" width="2.21" height="2.85" fill="#ff7426"/><rect x="908.44" y="228.41" width="2.21" height="2.85" fill="#ffa93a"/><rect x="910.34" y="228.41" width="2.21" height="2.85" fill="#ff9431"/><rect x="912.25" y="228.41" width="2.21" height="2.85" fill="#ff7527"/><rect x="914.16" y="228.41" width="2.21" height="2.85" fill="#ff3e14"/><rect x="916.06" y="228.41" width="2.21" height="2.85" fill="#ff822b"/><rect x="917.97" y="228.41" width="2.21" height="2.85" fill="#f70000"/><rect x="919.88" y="228.41" width="2.21" height="2.85" fill="#ff0301"/><rect x="921.78" y="228.41" width="2.21" height="2.85" fill="#c40000"/><rect x="923.69" y="228.41" width="2.21" height="2.85" fill="#720000"/><rect x="925.59" y="228.41" width="2.21" height="2.85" fill="#520000"/><rect x="927.50" y="228.41" width="2.21" height="2.85" fill="#250000"/><rect x="792.16" y="230.97" width="2.21" height="2.85" fill="#0b0000"/><rect x="881.75" y="230.97" width="2.21" height="2.85" fill="#080000"/><rect x="891.28" y="230.97" width="2.21" height="2.85" fill="#310000"/><rect x="893.19" y="230.97" width="2.21" height="2.85" fill="#390000"/><rect x="895.09" y="230.97" width="2.21" height="2.85" fill="#6c0000"/><rect x="897.00" y="230.97" width="2.21" height="2.85" fill="#9b0000"/><rect x="898.91" y="230.97" width="2.21" height="2.85" fill="#e40000"/><rect x="900.81" y="230.97" width="2.21" height="2.85" fill="#cd0000"/><rect x="902.72" y="230.97" width="2.21" height="2.85" fill="#ff0b03"/><rect x="904.62" y="230.97" width="2.21" height="2.85" fill="#ff1707"/><rect x="906.53" y="230.97" width="2.21" height="2.85" fill="#ff270d"/><rect x="908.44" y="230.97" width="2.21" height="2.85" fill="#f00000"/><rect x="910.34" y="230.97" width="2.21" height="2.85" fill="#df0000"/><rect x="912.25" y="230.97" width="2.21" height="2.85" fill="#f60000"/><rect x="914.16" y="230.97" width="2.21" height="2.85" fill="#f10000"/><rect x="916.06" y="230.97" width="2.21" height="2.85" fill="#b40000"/><rect x="917.97" y="230.97" width="2.21" height="2.85" fill="#970000"/><rect x="919.88" y="230.97" width="2.21" height="2.85" fill="#5e0000"/><rect x="921.78" y="230.97" width="2.21" height="2.85" fill="#5d0000"/><rect x="923.69" y="230.97" width="2.21" height="2.85" fill="#2f0000"/><rect x="925.59" y="230.97" width="2.21" height="2.85" fill="#230000"/><rect x="883.66" y="233.52" width="2.21" height="2.85" fill="#0a0000"/><rect x="885.56" y="233.52" width="2.21" height="2.85" fill="#0a0000"/><rect x="891.28" y="233.52" width="2.21" height="2.85" fill="#060000"/><rect x="895.09" y="233.52" width="2.21" height="2.85" fill="#260000"/><rect x="897.00" y="233.52" width="2.21" height="2.85" fill="#330000"/><rect x="898.91" y="233.52" width="2.21" height="2.85" fill="#1b0000"/><rect x="900.81" y="233.52" width="2.21" height="2.85" fill="#3e0000"/><rect x="902.72" y="233.52" width="2.21" height="2.85" fill="#400000"/><rect x="904.62" y="233.52" width="2.21" height="2.85" fill="#380000"/><rect x="906.53" y="233.52" width="2.21" height="2.85" fill="#420000"/><rect x="908.44" y="233.52" width="2.21" height="2.85" fill="#480000"/><rect x="910.34" y="233.52" width="2.21" height="2.85" fill="#4a0000"/><rect x="912.25" y="233.52" width="2.21" height="2.85" fill="#400000"/><rect x="914.16" y="233.52" width="2.21" height="2.85" fill="#1f0000"/><rect x="916.06" y="233.52" width="2.21" height="2.85" fill="#0e0000"/><rect x="917.97" y="233.52" width="2.21" height="2.85" fill="#0b0000"/><rect x="919.88" y="233.52" width="2.21" height="2.85" fill="#270000"/><rect x="891.28" y="236.08" width="2.21" height="2.85" fill="#090000"/><rect x="895.09" y="236.08" width="2.21" height="2.85" fill="#080000"/><rect x="900.81" y="236.08" width="2.21" height="2.85" fill="#130000"/><rect x="902.72" y="236.08" width="2.21" height="2.85" fill="#160000"/><rect x="908.44" y="236.08" width="2.21" height="2.85" fill="#200000"/><rect x="910.34" y="236.08" width="2.21" height="2.85" fill="#210000"/><rect x="917.97" y="236.08" width="2.21" height="2.85" fill="#070000"/><rect x="919.88" y="236.08" width="2.21" height="2.85" fill="#120000"/><rect x="925.59" y="236.08" width="2.21" height="2.85" fill="#0b0000"/><rect x="1041.88" y="236.08" width="2.21" height="2.85" fill="#090000"/><rect x="887.47" y="238.63" width="2.21" height="2.85" fill="#070000"/><rect x="893.19" y="238.63" width="2.21" height="2.85" fill="#060000"/><rect x="895.09" y="238.63" width="2.21" height="2.85" fill="#060000"/><rect x="900.81" y="238.63" width="2.21" height="2.85" fill="#0d0000"/><rect x="910.34" y="238.63" width="2.21" height="2.85" fill="#0e0000"/><rect x="1072.38" y="238.63" width="2.21" height="2.85" fill="#160000"/><rect x="912.25" y="241.19" width="2.21" height="2.85" fill="#070000"/><rect x="914.16" y="241.19" width="2.21" height="2.85" fill="#090000"/><rect x="917.97" y="241.19" width="2.21" height="2.85" fill="#090000"/><rect x="923.69" y="241.19" width="2.21" height="2.85" fill="#070000"/><rect x="956.09" y="241.19" width="2.21" height="2.85" fill="#080000"/><rect x="1019.00" y="241.19" width="2.21" height="2.85" fill="#0e0000"/><rect x="799.78" y="243.74" width="2.21" height="2.85" fill="#0c0000"/><rect x="874.12" y="243.74" width="2.21" height="2.85" fill="#110000"/><rect x="813.12" y="251.41" width="2.21" height="2.85" fill="#110000"/><rect x="1039.97" y="251.41" width="2.21" height="2.85" fill="#0f0000"/><rect x="870.31" y="253.96" width="2.21" height="2.85" fill="#080000"/><rect x="908.44" y="253.96" width="2.21" height="2.85" fill="#150000"/><rect x="990.41" y="253.96" width="2.21" height="2.85" fill="#180000"/><rect x="948.47" y="261.62" width="2.21" height="2.85" fill="#100000"/><rect x="1070.47" y="261.62" width="2.21" height="2.85" fill="#140000"/><rect x="797.88" y="264.18" width="2.21" height="2.85" fill="#0f0000"/><rect x="815.03" y="264.18" width="2.21" height="2.85" fill="#0a0000"/><rect x="965.62" y="264.18" width="2.21" height="2.85" fill="#0c0000"/><rect x="994.22" y="264.18" width="2.21" height="2.85" fill="#0c0000"/><rect x="1015.19" y="264.18" width="2.21" height="2.85" fill="#0a0000"/><rect x="895.09" y="266.74" width="2.21" height="2.85" fill="#080000"/><rect x="1045.69" y="266.74" width="2.21" height="2.85" fill="#0b0000"/><rect x="841.72" y="274.40" width="2.21" height="2.85" fill="#1a0000"/><rect x="898.91" y="276.96" width="2.21" height="2.85" fill="#150000"/><rect x="946.56" y="276.96" width="2.21" height="2.85" fill="#120000"/><rect x="1022.81" y="276.96" width="2.21" height="2.85" fill="#1b0000"/><rect x="853.16" y="279.51" width="2.21" height="2.85" fill="#0b0000"/><rect x="992.31" y="279.51" width="2.21" height="2.85" fill="#0e0000"/><rect x="797.88" y="282.07" width="2.21" height="2.85" fill="#0b0000"/><rect x="851.25" y="282.07" width="2.21" height="2.85" fill="#190000"/><rect x="1038.06" y="282.07" width="2.21" height="2.85" fill="#100000"/><rect x="916.06" y="284.62" width="2.21" height="2.85" fill="#1b0000"/><rect x="1019.00" y="284.62" width="2.21" height="2.85" fill="#1c0000"/><rect x="1030.44" y="284.62" width="2.21" height="2.85" fill="#0e0000"/><rect x="815.03" y="287.18" width="2.21" height="2.85" fill="#0d0000"/><rect x="994.22" y="287.18" width="2.21" height="2.85" fill="#1c0000"/><rect x="919.88" y="289.73" width="2.21" height="2.85" fill="#110000"/><rect x="868.41" y="292.29" width="2.21" height="2.85" fill="#110000"/><rect x="1005.66" y="292.29" width="2.21" height="2.85" fill="#190000"/><rect x="776.91" y="294.84" width="2.21" height="2.85" fill="#0d0000"/><rect x="978.97" y="294.84" width="2.21" height="2.85" fill="#0a0000"/><rect x="1030.44" y="294.84" width="2.21" height="2.85" fill="#100000"/><rect x="1053.31" y="294.84" width="2.21" height="2.85" fill="#170000"/><rect x="836.00" y="297.39" width="2.21" height="2.85" fill="#0b0000"/><rect x="1078.09" y="297.39" width="2.21" height="2.85" fill="#0c0000"/><rect x="799.78" y="299.95" width="2.21" height="2.85" fill="#1b0000"/><rect x="811.22" y="299.95" width="2.21" height="2.85" fill="#070000"/><rect x="836.00" y="299.95" width="2.21" height="2.85" fill="#150000"/><rect x="919.88" y="299.95" width="2.21" height="2.85" fill="#0e0000"/><rect x="1015.19" y="299.95" width="2.21" height="2.85" fill="#0f0000"/><rect x="1020.91" y="299.95" width="2.21" height="2.85" fill="#0a0000"/><rect x="856.97" y="307.62" width="2.21" height="2.85" fill="#0c0000"/><rect x="912.25" y="307.62" width="2.21" height="2.85" fill="#180000"/><rect x="879.84" y="310.17" width="2.21" height="2.85" fill="#0b0000"/><rect x="879.84" y="312.73" width="2.21" height="2.85" fill="#1a0000"/><rect x="921.78" y="312.73" width="2.21" height="2.85" fill="#140000"/><rect x="1030.44" y="312.73" width="2.21" height="2.85" fill="#0c0000"/><rect x="967.53" y="315.28" width="2.21" height="2.85" fill="#110000"/><rect x="1030.44" y="315.28" width="2.21" height="2.85" fill="#0f0000"/><rect x="916.06" y="317.84" width="2.21" height="2.85" fill="#1a0000"/><rect x="952.28" y="320.39" width="2.21" height="2.85" fill="#1b0000"/><rect x="982.78" y="322.95" width="2.21" height="2.85" fill="#120000"/><rect x="984.69" y="322.95" width="2.21" height="2.85" fill="#0f0000"/><rect x="1032.34" y="322.95" width="2.21" height="2.85" fill="#0f0000"/></svg>
<div class="t r" style="right:391.0px;top:64.0px;">0</div>
<div class="tick" style="left:769px;top:70px;width:5px;height:1px"></div>
<div class="t r" style="right:391.0px;top:89.5px;">10</div>
<div class="tick" style="left:769px;top:96px;width:5px;height:1px"></div>
<div class="t r" style="right:391.0px;top:115.1px;">20</div>
<div class="tick" style="left:769px;top:121px;width:5px;height:1px"></div>
<div class="t r" style="right:391.0px;top:140.7px;">30</div>
<div class="tick" style="left:769px;top:147px;width:5px;height:1px"></div>
<div class="t r" style="right:391.0px;top:166.2px;">40</div>
<div class="tick" style="left:769px;top:172px;width:5px;height:1px"></div>
<div class="t r" style="right:391.0px;top:191.8px;">50</div>
<div class="tick" style="left:769px;top:198px;width:5px;height:1px"></div>
<div class="t r" style="right:391.0px;top:217.3px;">60</div>
<div class="tick" style="left:769px;top:223px;width:5px;height:1px"></div>
<div class="t r" style="right:391.0px;top:242.8px;">70</div>
<div class="tick" style="left:769px;top:249px;width:5px;height:1px"></div>
<div class="t r" style="right:391.0px;top:268.4px;">80</div>
<div class="tick" style="left:769px;top:274px;width:5px;height:1px"></div>
<div class="t r" style="right:391.0px;top:293.9px;">90</div>
<div class="tick" style="left:769px;top:300px;width:5px;height:1px"></div>
<div class="t r" style="right:391.0px;top:319.5px;">100</div>
<div class="tick" style="left:769px;top:326px;width:5px;height:1px"></div>
<div class="t" style="left:775.5px;top:334.0px;width:200px;margin-left:-100px;text-align:center;letter-spacing:-0.5px">0</div>
<div class="tick" style="left:775px;top:327px;width:1px;height:4px"></div>
<div class="t" style="left:813.6px;top:334.0px;width:200px;margin-left:-100px;text-align:center;letter-spacing:-0.5px">20</div>
<div class="tick" style="left:813px;top:327px;width:1px;height:4px"></div>
<div class="t" style="left:851.8px;top:334.0px;width:200px;margin-left:-100px;text-align:center;letter-spacing:-0.5px">40</div>
<div class="tick" style="left:851px;top:327px;width:1px;height:4px"></div>
<div class="t" style="left:889.9px;top:334.0px;width:200px;margin-left:-100px;text-align:center;letter-spacing:-0.5px">60</div>
<div class="tick" style="left:889px;top:327px;width:1px;height:4px"></div>
<div class="t" style="left:928.0px;top:334.0px;width:200px;margin-left:-100px;text-align:center;letter-spacing:-0.5px">80</div>
<div class="tick" style="left:928px;top:327px;width:1px;height:4px"></div>
<div class="t" style="left:966.1px;top:334.0px;width:200px;margin-left:-100px;text-align:center;letter-spacing:-0.5px">100</div>
<div class="tick" style="left:966px;top:327px;width:1px;height:4px"></div>
<div class="t" style="left:1004.2px;top:334.0px;width:200px;margin-left:-100px;text-align:center;letter-spacing:-0.5px">120</div>
<div class="tick" style="left:1004px;top:327px;width:1px;height:4px"></div>
<div class="t" style="left:1042.4px;top:334.0px;width:200px;margin-left:-100px;text-align:center;letter-spacing:-0.5px">140</div>
<div class="tick" style="left:1042px;top:327px;width:1px;height:4px"></div>
<div class="t" style="left:1080.5px;top:334.0px;width:200px;margin-left:-100px;text-align:center;letter-spacing:-0.5px">160</div>
<div class="tick" style="left:1080px;top:327px;width:1px;height:4px"></div>
<div class="a" style="left:1106px;top:57px;width:20px;height:150px;border:1px solid #000;background:linear-gradient(#fff 0,#fff 3px,#000 3px,#000 5px,#ffe050 5px,#ffb040 18%,#ff9030 24%,#ff4010 40%,#ff0000 50%,#c00000 62%,#800000 70%,#400000 82%,#000 93%,#000 100%)"></div>
<div class="tick" style="left:1128px;top:63px;width:5px;height:1px"></div>
<div class="t " style="left:1134.5px;top:57.0px;">200</div>
<div class="tick" style="left:1128px;top:132px;width:5px;height:1px"></div>
<div class="t " style="left:1134.5px;top:126.0px;">135</div>
<div class="tick" style="left:1128px;top:200px;width:5px;height:1px"></div>
<div class="t " style="left:1134.5px;top:194.5px;">70</div>
<div class="sys" style="left:735.5px;top:388.500px;width:92px;height:30px;background:linear-gradient(#f0f0f0,#e9e9e9 48%,#dddddd 52%,#d6d6d6)"></div>
<div class="a" style="left:746.5px;top:396.500px;width:16px;height:15px;background:#f00000;border:1px solid #d00"></div>
<div class="t " style="left:780.5px;top:397.0px;color:#e81010">STOP</div>
<div class="t " style="left:843.5px;top:369.5px;">Gain</div>
<div class="sys" style="left:843.5px;top:387.5px;width:90.5px;height:31.0px"></div>
<div class="a" style="left:867.0px;top:393.5px;width:61.5px;height:20.0px;background:#fbfbfb;border:1px solid;border-color:#7e7e7e #c4c4c4 #c4c4c4 #7e7e7e;box-shadow:inset 1px 1px 0 #c0c0c0"></div>
<div class="t " style="left:871.5px;top:396.3px;">0</div>
<svg class="a" style="left:850.0px;top:393.5px" width="13" height="10"><rect x=".5" y=".5" width="12" height="9" rx="1.500" fill="#ececec" stroke="#8e8e8e"/><path d="M3.500 6.500L6.500 3L9.500 6.500Z" fill="#555"/></svg>
<svg class="a" style="left:850.0px;top:403.5px" width="13" height="10"><rect x=".5" y=".5" width="12" height="9" rx="1.500" fill="#ececec" stroke="#8e8e8e"/><path d="M3.500 3.500L6.500 7L9.500 3.500Z" fill="#555"/></svg>
<div class="t " style="left:951.5px;top:369.5px;">Exposure (ms)</div>
<div class="sys" style="left:951.5px;top:387.5px;width:102.5px;height:31.0px"></div>
<div class="a" style="left:975.0px;top:393.5px;width:73.5px;height:20.0px;background:#fbfbfb;border:1px solid;border-color:#7e7e7e #c4c4c4 #c4c4c4 #7e7e7e;box-shadow:inset 1px 1px 0 #c0c0c0"></div>
<div class="t " style="left:979.5px;top:396.3px;">100</div>
<svg class="a" style="left:958.0px;top:393.5px" width="13" height="10"><rect x=".5" y=".5" width="12" height="9" rx="1.500" fill="#ececec" stroke="#8e8e8e"/><path d="M3.500 6.500L6.500 3L9.500 6.500Z" fill="#555"/></svg>
<svg class="a" style="left:958.0px;top:403.5px" width="13" height="10"><rect x=".5" y=".5" width="12" height="9" rx="1.500" fill="#ececec" stroke="#8e8e8e"/><path d="M3.500 3.500L6.500 7L9.500 3.500Z" fill="#555"/></svg>
<div class="t " style="left:1083.5px;top:370.5px;">FrameNumber</div>
<div class="sys" style="left:1083.5px;top:387.5px;width:86.5px;height:31.0px"></div>
<div class="a" style="left:1088.5px;top:393.5px;width:68.0px;height:20.0px;background:#d9d9d9;border:1px solid;border-color:#7e7e7e #c4c4c4 #c4c4c4 #7e7e7e;box-shadow:inset 1px 1px 0 #c0c0c0"></div>
<div class="t " style="left:1093.0px;top:396.3px;">160</div>
<div class="t " style="left:746.5px;top:430.5px;">file (use dialog)</div>
<div class="a" style="left:746.5px;top:447px;width:338px;height:20px;background:#fbfbfb;border:2px solid;border-color:#bdbdbd #ececec #ececec #bdbdbd"></div>
<div class="a" style="left:748.5px;top:449px;width:10px;height:16px;background:#cfcfcf"></div>
<svg class="a" style="left:750px;top:451px" width="8" height="12"><path d="M1.500 1.500h3v3h-3zM3.500 4.500v5M3.500 6.500h3v3h-3z" fill="none" stroke="#000"/></svg>
<div class="t " style="left:761.5px;top:451.5px;letter-spacing:-0.1px">C:\VIs\Thorcam\LatestImage.txt</div>
<div class="a" style="left:1089.500px;top:446px;width:27.500px;height:17.500px;background:#bdbdbd;border:1px solid;border-color:#e0e0e0 #8a8a8a #8a8a8a #e0e0e0"></div>
<svg class="a" style="left:1095px;top:448px" width="17" height="13"><path d="M1.500 11.500V2.500h4l1 1.500h5v2" fill="#f0e000" stroke="#222"/><path d="M1.500 11.500L4 6.500h11.500L12.500 11.500z" fill="#8a8a6a" stroke="#222"/></svg>
<div class="a" style="left:717px;top:482px;width:442px;height:17px;background:#f0f0f0"></div>
<div class="a" style="left:900px;top:483px;width:232px;height:16px;background:#cdcdcd"></div>
<div class="a" style="left:717px;top:482.500px;width:165.500px;height:16.500px;background:#fff;border:1px solid #000"></div>
<div class="t " style="left:721.0px;top:483.2px;font-size:13px;letter-spacing:-0.34px">Thorcam.lvproj/My Computer</div>
<svg class="a" style="left:885.500px;top:484px" width="12" height="14"><path d="M8 2.500L3.500 7L8 11.500" fill="none" stroke="#555" stroke-width="1.8"/></svg>
<svg class="a" style="left:1147px;top:484px" width="12" height="14"><path d="M3.500 2.500L8 7L3.500 11.500" fill="none" stroke="#555" stroke-width="1.8"/></svg>
<div class="a" style="left:0;top:523px;width:424px;height:490px;background:#e1e1e1"></div>
<div class="a" style="left:0;top:523px;width:424px;height:32px;background:#fff"></div>
<svg class="a" style="left:-6.0px;top:530.5px" width="16" height="15" viewBox="0 0 16 15"><rect width="16" height="15" fill="#555a60"/><path d="M2.500 2.500L13 7.500L2.500 12.500z" fill="#ffd200"/><path d="M5 7.500h3M6.500 6v3" stroke="#555" stroke-width="1"/></svg>
<div class="t " style="left:15.5px;top:532.5px;color:#999;font-size:12px;letter-spacing:-0.1px">e-source_main.vi</div>
<svg class="a" style="left:305.0px;top:532.7px" width="120" height="12"><path d="M0 5.500h10" stroke="#888" stroke-width="1"/><rect x="45.5" y="0.500" width="9" height="9" fill="none" stroke="#888"/><path d="M91.5 0.500l9.500 9.500M101.0 0.500l-9.500 9.500" stroke="#888" stroke-width="1.1"/></svg>
<div class="a" style="left:0;top:555px;width:424px;height:46px;background:#f0f0f0"></div>
<div class="a" style="left:0;top:575px;width:390px;height:1px;background:#8f8f8f"></div>
<div class="a" style="left:0;top:600px;width:424px;height:1px;background:#5a5a5a"></div>
<div class="t " style="left:-1.0px;top:557.0px;font-size:12px;letter-spacing:-0.1px">le</div>
<div class="t " style="left:23.5px;top:557.0px;font-size:12px;letter-spacing:-0.1px">Edit</div>
<div class="t " style="left:57.0px;top:557.0px;font-size:12px;letter-spacing:-0.1px">View</div>
<div class="t " style="left:96.5px;top:557.0px;font-size:12px;letter-spacing:-0.1px">Project</div>
<div class="t " style="left:147.5px;top:557.0px;font-size:12px;letter-spacing:-0.1px">Operate</div>
<div class="t " style="left:203.0px;top:557.0px;font-size:12px;letter-spacing:-0.1px">Tools</div>
<div class="t " style="left:246.0px;top:557.0px;font-size:12px;letter-spacing:-0.1px">Window</div>
<div class="t " style="left:304.5px;top:557.0px;font-size:12px;letter-spacing:-0.1px">Help</div>
<svg class="a" style="left:37.0px;top:581.0px" width="17" height="15" viewBox="0 0 17 15"><path d="M4 4h4V0.500L16 7.500L8 14.500V11H4z" fill="#000"/><path d="M1.500 4v7M3 4v7" stroke="#000" stroke-width="0.9"/><path d="M5.500 1v2.500M7 1v2.500M5.500 11.500V14M7 11.500V14" stroke="#000" stroke-width="0.9"/></svg>
<svg class="a" style="left:58.5px;top:581.0px" width="18" height="15" viewBox="0 0 18 15"><path d="M5 1.500h8.500v3.500h3L12 9.500L7.500 5h3V4.500H5z" fill="#fff" stroke="#000" stroke-width="0.95"/><path d="M13 13.500H4.500V10h-3L6 5.500L10.500 10h-3v0.500H13z" fill="#fff" stroke="#000" stroke-width="1.1"/><path d="M5 1.500L13 13.500" stroke="#000" stroke-width="1.1"/></svg>
<svg class="a" style="left:84.5px;top:580.2px" width="16" height="16" viewBox="0 0 16 16"><path d="M5 0.700h6L15.300 5v6L11 15.300H5L0.700 11V5z" fill="#f4f4f4" stroke="#111" stroke-width="1.1"/><path d="M5.600 2.600h4.800l3 3v4.800l-3 3H5.600l-3-3V5.600z" fill="#b01c1c"/><path d="M5.800 3.600h4.400l1.800 1.800H4z" fill="#e06060" opacity=".7"/></svg>
<div class="a" style="left:108.7px;top:583.0px;width:3px;height:10px;background:#000"></div><div class="a" style="left:114.7px;top:583.0px;width:3px;height:10px;background:#000"></div>
<svg class="a" style="left:371.0px;top:580.3px" width="11.500" height="15" viewBox="0 0 13 17"><path d="M2.200 5.200c0-5 8-5 8 -0.700c0 3-4 3-4 6.500" fill="none" stroke="#222" stroke-width="3.600" transform="translate(.7 .8)"/><circle cx="6.900" cy="14.800" r="1.900" fill="#222"/><path d="M2 5c0-5 8-5 8-0.700c0 3-4 3-4 6.500" fill="none" stroke="#fafa00" stroke-width="2.700"/><circle cx="6" cy="14" r="1.600" fill="#fafa00"/></svg>
<div class="a" style="left:389px;top:555px;width:1px;height:45px;background:#8a8a8a"></div>
<div class="a" style="left:391px;top:561px;width:32px;height:32px;background:#fff;border:1px solid #000"></div>
<svg class="a" style="left:392px;top:562px" width="30" height="30"><rect x="3" y="3" width="17" height="14" fill="#c8c8a0" stroke="#333"/><rect x="4.500" y="4.500" width="10" height="8" fill="#000"/><path d="M5 9c1-4 2.500-4 3.500 0s2.500 4 3.500 0s1.500-3 2-2" fill="none" stroke="#0e0" stroke-width="1.1"/><path d="M5 15v3c2 4 7 4 11 0" fill="none" stroke="#1030c0" stroke-width="1.1"/><path d="M9 17c1-3 3-4 8-3h10" fill="none" stroke="#e00" stroke-width="1.1"/><path d="M18.500 10.500L25.500 14.500L18.500 18.500z" fill="#f0e020" stroke="#555"/><text x="22.500" y="28" font-family="Liberation Sans" font-size="8.500" fill="#000">2</text></svg>
<div class="sb" style="left:407.500px;top:601px;width:16.500px;height:394px"></div>
<div class="th" style="left:407.500px;top:671px;width:16.500px;height:249px"></div>
<svg class="a" style="left:409px;top:605px" width="14" height="10"><path d="M2.500 7.500L7 3L11.500 7.500" fill="none" stroke="#444" stroke-width="1.8"/></svg>
<svg class="a" style="left:409px;top:981px" width="14" height="10"><path d="M2.500 2.500L7 7L11.500 2.500" fill="none" stroke="#444" stroke-width="1.8"/></svg>
<div class="a" style="left:0.5px;top:639.5px;width:396.5px;height:347.0px;background:#b4b4b4;box-shadow:inset 2px 2px 0 #cfcfcf,inset -3px -3px 0 #999"></div>
<div class="a" style="left:0.5px;top:613.0px;width:50.0px;height:29.5px;background:#b4b4b4;border-radius:3px 3px 0 0;box-shadow:inset 2px 2px 0 #d4d4d4,inset -2px 0 0 #8c8c8c"></div>
<div class="a" style="left:51.5px;top:615.5px;width:51.0px;height:24.0px;background:#afafaf;border-radius:3px 3px 0 0;box-shadow:inset 2px 2px 0 #cccccc,inset -2px 0 0 #8c8c8c"></div>
<div class="t " style="left:10.5px;top:619.0px;">Main</div>
<div class="t " style="left:59.0px;top:621.0px;">Stored</div>
<svg class="a" style="left:21.5px;top:664.5px" width="50.0" height="23.0" viewBox="0 0 50.0 23.0"><ellipse cx="25.5" cy="12.0" rx="23.5" ry="10.0" fill="#8a8a8a"/><ellipse cx="23.5" cy="10.0" rx="23.0" ry="9.5" fill="url(#lg215)" stroke="#444" stroke-width="1.4"/><defs><linearGradient id="lg215" x1="0" y1="0" x2="0" y2="1"><stop offset="0" stop-color="#c2c2c2"/><stop offset="0.5" stop-color="#b0b0b0"/><stop offset="1" stop-color="#989898"/></linearGradient></defs><path d="M29.6 4.8v10.4l11.8 -5.2z" fill="#2a6a2a"/></svg>
<div class="t " style="left:76.5px;top:669.0px;">Enable e-source</div>
<div class="btn" style="left:198px;top:663px;width:63px;height:20px"></div>
<div class="t" style="left:229.5px;top:666.5px;width:200px;margin-left:-100px;text-align:center;color:#f01010;letter-spacing:0">ABORT</div>
<div class="btn" style="left:277px;top:663px;width:99px;height:20px"></div>
<div class="t" style="left:326.5px;top:666.5px;width:200px;margin-left:-100px;text-align:center;color:#f01010;letter-spacing:-0.1px">Stop Eventually</div>
<div class="fld w" style="left:21.5px;top:699.5px;width:58.5px;height:23.5px;"><div class="t" style="top:2.2px;">0</div></div>
<div class="t " style="left:83.5px;top:702.5px;">Burn time (s)</div>
<div class="fld w" style="left:21.5px;top:731.5px;width:58.5px;height:23.5px;"><div class="t" style="top:2.2px;">0.000</div></div>
<div class="t " style="left:83.5px;top:732.5px;">Target current (A)</div>
<div class="fld w" style="left:21.5px;top:763.0px;width:58.5px;height:23.0px;"><div class="t" style="top:2.0px;">8.180</div></div>
<div class="t " style="left:83.5px;top:763.5px;">Max Voltage (V)</div>
<div class="t r" style="right:841.5px;top:704.0px;font-weight:bold;font-size:13.5px;letter-spacing:-0.2px">Time (s)</div>
<div class="fld " style="left:321.5px;top:700.0px;width:59.0px;height:25.5px;"><div class="t" style="top:3.2px;font-weight:bold;font-size:13.5px">30.1</div></div>
<div class="t r" style="right:841.5px;top:734.0px;">Measured Current (A)</div>
<div class="fld " style="left:321.5px;top:731.5px;width:59.0px;height:23.0px;"><div class="t" style="top:2.0px;">58.50m</div></div>
<div class="t r" style="right:841.5px;top:767.0px;">Measured Voltage (V)</div>
<div class="fld " style="left:321.5px;top:764.0px;width:59.0px;height:23.0px;"><div class="t" style="top:2.0px;">1.102</div></div>
<svg class="a" style="left:21.0px;top:799.0px" width="51.5" height="24.5" viewBox="0 0 51.5 24.5"><ellipse cx="26.2" cy="12.8" rx="24.2" ry="10.8" fill="#8a8a8a"/><ellipse cx="24.2" cy="10.8" rx="23.8" ry="10.2" fill="url(#lg211)" stroke="#444" stroke-width="1.4"/><defs><linearGradient id="lg211" x1="0" y1="0" x2="0" y2="1"><stop offset="0" stop-color="#c2c2c2"/><stop offset="0.5" stop-color="#b0b0b0"/><stop offset="1" stop-color="#989898"/></linearGradient></defs><path d="M30.6 5.2v11.2l12.1 -5.6z" fill="#48e818"/></svg>
<div class="t " style="left:76.0px;top:803.5px;">Feedback</div>
<div class="t " style="left:290.5px;top:807.0px;">PID on</div>
<svg class="a" style="left:333.5px;top:802.0px" width="50.0" height="26.0" viewBox="0 0 50.0 26.0"><ellipse cx="25.5" cy="13.5" rx="23.5" ry="11.5" fill="#8a8a8a"/><ellipse cx="23.5" cy="11.5" rx="23.0" ry="11.0" fill="url(#lg3335)" stroke="#444" stroke-width="1.4"/><defs><linearGradient id="lg3335" x1="0" y1="0" x2="0" y2="1"><stop offset="0" stop-color="#c2c2c2"/><stop offset="0.5" stop-color="#b0b0b0"/><stop offset="1" stop-color="#989898"/></linearGradient></defs><path d="M29.6 5.5v12.0l11.8 -6.0z" fill="#2a6a2a"/></svg>
<div class="t " style="left:29.5px;top:838.0px;">Volts vs. seconds</div>
<div class="a" style="left:21.5px;top:855.0px;width:359.5px;height:119.5px;background:linear-gradient(90deg,#dadada 0,#c6c6c6 5px,#c0c0c0 12px,#c0c0c0 calc(100% - 16px),#a6a6a6 calc(100% - 9px),#909090 100%);box-shadow:inset 0 2px 0 #d6d6d6,inset 0 -2px 0 #9a9a9a"></div>
<svg class="a" style="left:62.0px;top:864.0px" width="295.0" height="85.0" viewBox="62.0 864.0 295.0 85.0"><rect x="62.0" y="864.0" width="295.0" height="85.0" fill="#000"/><path d="M71.5 864.0V949.0M80.5 864.0V949.0M88.5 864.0V949.0M97.5 864.0V949.0M113.5 864.0V949.0M122.5 864.0V949.0M130.5 864.0V949.0M138.5 864.0V949.0M155.5 864.0V949.0M164.5 864.0V949.0M172.5 864.0V949.0M180.5 864.0V949.0M197.5 864.0V949.0M206.5 864.0V949.0M214.5 864.0V949.0M222.5 864.0V949.0M239.5 864.0V949.0M247.5 864.0V949.0M256.5 864.0V949.0M264.5 864.0V949.0M281.5 864.0V949.0M289.5 864.0V949.0M298.5 864.0V949.0M306.5 864.0V949.0M323.5 864.0V949.0M331.5 864.0V949.0M340.5 864.0V949.0M348.5 864.0V949.0M62.0 940.5H357.0M62.0 923.5H357.0M62.0 906.5H357.0M62.0 890.5H357.0M62.0 873.5H357.0" stroke="#003600" stroke-width="1" fill="none" shape-rendering="crispEdges"/><path d="M105.5 864.0V949.0M147.5 864.0V949.0M189.5 864.0V949.0M231.5 864.0V949.0M273.5 864.0V949.0M315.5 864.0V949.0M62.0 932.5H357.0M62.0 915.5H357.0M62.0 898.5H357.0M62.0 881.5H357.0" stroke="#006300" stroke-width="1" fill="none" shape-rendering="crispEdges"/><polyline points="83.9,948.3 105.6,926.6 125.4,904.3 139.7,891.5 147.7,887.7 163.7,883.5 189.2,880.3 221.1,877.1 230.7,878.1 243.5,883.5 257.9,887.7 275.4,886.7 285.0,886.7 291.4,888.3 299.4,887.0 309.0,890.2 317.6,889.3 319.5,900.4 321.4,912.9 323.3,925.7 324.9,939.4 326.5,948.3" fill="none" stroke="#fff" stroke-width="1.2"/><path d="M82.0 948.5h5M84.5 946.0v5M84.0 947.5h5M86.5 945.0v5M85.0 945.5h5M87.5 943.0v5M87.0 943.5h5M89.5 941.0v5M88.0 942.5h5M90.5 940.0v5M90.0 940.5h5M92.5 938.0v5M92.0 939.5h5M94.5 937.0v5M93.0 937.5h5M95.5 935.0v5M95.0 935.5h5M97.5 933.0v5M97.0 934.5h5M99.5 932.0v5M98.0 932.5h5M100.5 930.0v5M100.0 930.5h5M102.5 928.0v5M101.0 929.5h5M103.5 927.0v5M103.0 927.5h5M105.5 925.0v5M105.0 925.5h5M107.5 923.0v5M106.0 924.5h5M108.5 922.0v5M108.0 922.5h5M110.5 920.0v5M109.0 920.5h5M111.5 918.0v5M111.0 919.5h5M113.5 917.0v5M112.0 917.5h5M114.5 915.0v5M114.0 915.5h5M116.5 913.0v5M115.0 913.5h5M117.5 911.0v5M117.0 912.5h5M119.5 910.0v5M118.0 910.5h5M120.5 908.0v5M120.0 908.5h5M122.5 906.0v5M121.0 907.5h5M123.5 905.0v5M123.0 905.5h5M125.5 903.0v5M125.0 903.5h5M127.5 901.0v5M126.0 902.5h5M128.5 900.0v5M128.0 900.5h5M130.5 898.0v5M130.0 899.5h5M132.5 897.0v5M131.0 897.5h5M133.5 895.0v5M133.0 896.5h5M135.5 894.0v5M135.0 894.5h5M137.5 892.0v5M137.0 893.5h5M139.5 891.0v5M138.0 891.5h5M140.5 889.0v5M140.0 890.5h5M142.5 888.0v5M143.0 889.5h5M145.5 887.0v5M145.0 888.5h5M147.5 886.0v5M147.0 887.5h5M149.5 885.0v5M149.0 887.5h5M151.5 885.0v5M151.0 886.5h5M153.5 884.0v5M153.0 886.5h5M155.5 884.0v5M156.0 885.5h5M158.5 883.0v5M158.0 884.5h5M160.5 882.0v5M160.0 884.5h5M162.5 882.0v5M162.0 883.5h5M164.5 881.0v5M165.0 883.5h5M167.5 881.0v5M167.0 883.5h5M169.5 881.0v5M169.0 883.5h5M171.5 881.0v5M172.0 882.5h5M174.5 880.0v5M174.0 882.5h5M176.5 880.0v5M176.0 882.5h5M178.5 880.0v5M178.0 881.5h5M180.5 879.0v5M181.0 881.5h5M183.5 879.0v5M183.0 881.5h5M185.5 879.0v5M185.0 881.5h5M187.5 879.0v5M187.0 880.5h5M189.5 878.0v5M190.0 880.5h5M192.5 878.0v5M192.0 880.5h5M194.5 878.0v5M194.0 880.5h5M196.5 878.0v5M197.0 879.5h5M199.5 877.0v5M199.0 879.5h5M201.5 877.0v5M201.0 879.5h5M203.5 877.0v5M204.0 879.5h5M206.5 877.0v5M206.0 878.5h5M208.5 876.0v5M208.0 878.5h5M210.5 876.0v5M210.0 878.5h5M212.5 876.0v5M213.0 878.5h5M215.5 876.0v5M215.0 878.5h5M217.5 876.0v5M217.0 877.5h5M219.5 875.0v5M220.0 877.5h5M222.5 875.0v5M222.0 877.5h5M224.5 875.0v5M224.0 878.5h5M226.5 876.0v5M226.0 878.5h5M228.5 876.0v5M229.0 878.5h5M231.5 876.0v5M231.0 879.5h5M233.5 877.0v5M233.0 880.5h5M235.5 878.0v5M235.0 881.5h5M237.5 879.0v5M237.0 882.5h5M239.5 880.0v5M239.0 883.5h5M241.5 881.0v5M241.0 883.5h5M243.5 881.0v5M244.0 884.5h5M246.5 882.0v5M246.0 885.5h5M248.5 883.0v5M248.0 885.5h5M250.5 883.0v5M250.0 886.5h5M252.5 884.0v5M252.0 887.5h5M254.5 885.0v5M255.0 887.5h5M257.5 885.0v5M257.0 888.5h5M259.5 886.0v5M259.0 888.5h5M261.5 886.0v5M261.0 887.5h5M263.5 885.0v5M264.0 887.5h5M266.5 885.0v5M266.0 887.5h5M268.5 885.0v5M268.0 887.5h5M270.5 885.0v5M271.0 887.5h5M273.5 885.0v5M273.0 887.5h5M275.5 885.0v5M275.0 887.5h5M277.5 885.0v5M278.0 887.5h5M280.5 885.0v5M280.0 887.5h5M282.5 885.0v5M282.0 887.5h5M284.5 885.0v5M284.0 887.5h5M286.5 885.0v5M287.0 888.5h5M289.5 886.0v5M289.0 888.5h5M291.5 886.0v5M291.0 888.5h5M293.5 886.0v5M293.0 888.5h5M295.5 886.0v5M296.0 887.5h5M298.5 885.0v5M298.0 887.5h5M300.5 885.0v5M300.0 888.5h5M302.5 886.0v5M302.0 889.5h5M304.5 887.0v5M304.0 889.5h5M306.5 887.0v5M307.0 890.5h5M309.5 888.0v5M309.0 890.5h5M311.5 888.0v5M311.0 890.5h5M313.5 888.0v5M314.0 890.5h5M316.5 888.0v5M318.0 900.5h5M320.5 898.0v5M319.0 913.5h5M321.5 911.0v5M321.0 926.5h5M323.5 924.0v5M323.0 939.5h5M325.5 937.0v5" stroke="#fff" stroke-width="1" shape-rendering="crispEdges"/><path d="M62.5 864.5V948.5" stroke="#7a7a7a"/></svg>
<div class="a" style="left:62.0px;top:949.0px;width:296.0px;height:1px;background:#dedede"></div><div class="a" style="left:357.0px;top:864.0px;width:1px;height:86.0px;background:#dedede"></div>
<div class="t r" style="right:1104.5px;top:858.0px;">8</div>
<div class="tick" style="left:56px;top:864px;width:5px;height:1px"></div>
<div class="t r" style="right:1104.5px;top:908.4px;">5</div>
<div class="tick" style="left:56px;top:915px;width:5px;height:1px"></div>
<div class="t r" style="right:1104.5px;top:942.0px;">3</div>
<div class="tick" style="left:56px;top:948px;width:5px;height:1px"></div>
<div class="tick" style="left:57px;top:873px;width:4px;height:1px"></div>
<div class="t" style="left:63.0px;top:957.0px;width:200px;margin-left:-100px;text-align:center;letter-spacing:-0.5px">0</div>
<div class="tick" style="left:63px;top:950px;width:1px;height:4px"></div>
<div class="t" style="left:104.9px;top:957.0px;width:200px;margin-left:-100px;text-align:center;letter-spacing:-0.5px">5</div>
<div class="tick" style="left:105px;top:950px;width:1px;height:4px"></div>
<div class="t" style="left:146.9px;top:957.0px;width:200px;margin-left:-100px;text-align:center;letter-spacing:-0.5px">10</div>
<div class="tick" style="left:147px;top:950px;width:1px;height:4px"></div>
<div class="t" style="left:188.8px;top:957.0px;width:200px;margin-left:-100px;text-align:center;letter-spacing:-0.5px">15</div>
<div class="tick" style="left:189px;top:950px;width:1px;height:4px"></div>
<div class="t" style="left:230.7px;top:957.0px;width:200px;margin-left:-100px;text-align:center;letter-spacing:-0.5px">20</div>
<div class="tick" style="left:231px;top:950px;width:1px;height:4px"></div>
<div class="t" style="left:272.6px;top:957.0px;width:200px;margin-left:-100px;text-align:center;letter-spacing:-0.5px">25</div>
<div class="tick" style="left:273px;top:950px;width:1px;height:4px"></div>
<div class="t" style="left:314.6px;top:957.0px;width:200px;margin-left:-100px;text-align:center;letter-spacing:-0.5px">30</div>
<div class="tick" style="left:315px;top:950px;width:1px;height:4px"></div>
<div class="t" style="left:356.5px;top:957.0px;width:200px;margin-left:-100px;text-align:center;letter-spacing:-0.5px">35</div>
<div class="tick" style="left:356px;top:950px;width:1px;height:4px"></div>
<div class="a" style="left:0;top:995px;width:424px;height:18px;background:#f0f0f0"></div>
<div class="th" style="left:198px;top:996px;width:156px;height:16px"></div>
<div class="a" style="left:0;top:995px;width:147.500px;height:16.500px;background:#fff;border:1px solid #000;border-left:0"></div>
<div class="t " style="left:-0.5px;top:996.2px;font-size:13px;letter-spacing:-0.41px">source.lvproj/My Computer</div>
<svg class="a" style="left:151px;top:997px" width="12" height="14"><path d="M8 2.500L3.500 7L8 11.500" fill="none" stroke="#555" stroke-width="1.8"/></svg>
<svg class="a" style="left:393px;top:997px" width="12" height="14"><path d="M3.500 2.500L8 7L3.500 11.500" fill="none" stroke="#555" stroke-width="1.8"/></svg>
<svg class="a" style="left:411px;top:1000px" width="12" height="11"><path d="M8 2h2M8 5h2M5 5h2M8 8h2M5 8h2M2 8h2" stroke="#bbb" stroke-width="2"/></svg>
<div class="win" style="left:454px;top:527px;width:530px;height:495px;background:#e1e1e1;background-image:linear-gradient(90deg,#cecece 1px,transparent 1px),linear-gradient(#cecece 1px,transparent 1px);background-size:12.080px 12.080px;background-position:0.600px 5.500px"></div>
<div class="a" style="left:454px;top:527px;width:530px;height:32px;background:#fff"></div>
<svg class="a" style="left:464.0px;top:534.3px" width="16" height="16" viewBox="0 0 16 15"><rect width="16" height="15" fill="#555a60"/><path d="M2.500 2.500L13 7.500L2.500 12.500z" fill="#ffd200"/><path d="M5 7.500h3M6.500 6v3" stroke="#555" stroke-width="1"/></svg>
<div class="t " style="left:485.5px;top:536.5px;color:#999;font-size:12px;letter-spacing:-0.02px">ReadCurrent.vi Front Panel on e-source.lvproj/My Computer *</div>
<svg class="a" style="left:864.5px;top:537.3px" width="120" height="12"><path d="M0 5.500h10" stroke="#888" stroke-width="1"/><rect x="45.0" y="0.500" width="9" height="9" fill="none" stroke="#888"/><path d="M90.5 0.500l9.500 9.500M100.0 0.500l-9.500 9.500" stroke="#888" stroke-width="1.1"/></svg>
<div class="a" style="left:454px;top:559px;width:530px;height:45px;background:#f0f0f0"></div>
<div class="a" style="left:454px;top:579px;width:462px;height:1px;background:#8f8f8f"></div>
<div class="a" style="left:454px;top:603.500px;width:530px;height:1px;background:#5a5a5a"></div>
<div class="t " style="left:461.5px;top:561.0px;font-size:12px;letter-spacing:-0.1px">File</div>
<div class="t " style="left:493.0px;top:561.0px;font-size:12px;letter-spacing:-0.1px">Edit</div>
<div class="t " style="left:527.0px;top:561.0px;font-size:12px;letter-spacing:-0.1px">View</div>
<div class="t " style="left:566.5px;top:561.0px;font-size:12px;letter-spacing:-0.1px">Project</div>
<div class="t " style="left:617.5px;top:561.0px;font-size:12px;letter-spacing:-0.1px">Operate</div>
<div class="t " style="left:673.0px;top:561.0px;font-size:12px;letter-spacing:-0.1px">Tools</div>
<div class="t " style="left:715.5px;top:561.0px;font-size:12px;letter-spacing:-0.1px">Window</div>
<div class="t " style="left:774.5px;top:561.0px;font-size:12px;letter-spacing:-0.1px">Help</div>
<svg class="a" style="left:509.0px;top:584.5px" width="17" height="15" viewBox="0 0 17 15"><path d="M1.500 5h5.500V1.800L13 7.500L7 13.200V10H1.500z" fill="#fff" stroke="#000" stroke-width="1.2"/></svg>
<svg class="a" style="left:529.0px;top:585.0px" width="18" height="15" viewBox="0 0 18 15"><path d="M5 1.500h8.500v3.500h3L12 9.500L7.500 5h3V4.500H5z" fill="#fff" stroke="#000" stroke-width="0.95"/><path d="M13 13.500H4.500V10h-3L6 5.500L10.500 10h-3v0.500H13z" fill="#fff" stroke="#000" stroke-width="1.1"/><path d="M5 1.500L13 13.500" stroke="#000" stroke-width="1.1"/></svg>
<svg class="a" style="left:554.5px;top:584.2px" width="16" height="16" viewBox="0 0 16 16"><path d="M5 0.700h6L15.300 5v6L11 15.300H5L0.700 11V5z" fill="#f4f4f4" stroke="#b4b4b4" stroke-width="1.1"/><path d="M5.600 2.600h4.800l3 3v4.800l-3 3H5.600l-3-3V5.600z" fill="#dcaaaa"/><path d="M5.800 3.600h4.400l1.800 1.800H4z" fill="#ecc8c8" opacity=".7"/></svg>
<div class="a" style="left:578.7px;top:587.0px;width:3px;height:10px;background:#000"></div><div class="a" style="left:584.7px;top:587.0px;width:3px;height:10px;background:#000"></div>
<div class="a" style="left:601px;top:582.500px;width:144.500px;height:19.500px;background:#fdfdfd;border:1px solid #7a7a7a"></div>
<div class="t " style="left:606.5px;top:585.0px;font-size:12px;letter-spacing:0.05px">15pt Application Font</div>
<svg class="a" style="left:730px;top:589px" width="9" height="6"><path d="M0.500 0.500h8L4.500 5.500z" fill="#222"/></svg>
<svg class="a" style="left:754px;top:584px" width="26" height="16"><rect x="1.500" y="1.500" width="3" height="3" fill="#40e0f0" stroke="#223"/><path d="M3 6v6M1 10l2 2l2-2M1 13.500h8" stroke="#000" stroke-width="0.9" fill="none" stroke-dasharray="1.500 1"/><rect x="8.500" y="8.500" width="7" height="4.500" fill="#f8f080" stroke="#222"/><path d="M18 6.500h6l-3 3.500z" fill="#000"/></svg>
<svg class="a" style="left:790px;top:584px" width="26" height="16"><path d="M1.500 4.500c3-3 9-3 13 0" fill="none" stroke="#000"/><rect x="1" y="8" width="2" height="2" fill="#000"/><rect x="5.500" y="5.500" width="4" height="8" fill="#f8f080" stroke="#222"/><rect x="10.500" y="9.500" width="4" height="4" fill="#40e0f0" stroke="#222"/><path d="M17 6.500h6l-3 3.500z" fill="#000"/></svg>
<svg class="a" style="left:825px;top:584px" width="27" height="16"><path d="M1.500 1v13M15.500 1v13" stroke="#000" stroke-dasharray="1 1"/><path d="M2 5.500h13M2 5.500l2.500-2M2 5.500l2.500 2M15 5.500l-2.500-2M15 5.500l-2.500 2" stroke="#000" fill="none"/><rect x="6.500" y="1.500" width="4" height="7" fill="#f8f080" stroke="#222"/><rect x="1.500" y="10.500" width="14" height="3" fill="#40e0f0" stroke="#222"/><path d="M18.500 6.500h6l-3 3.500z" fill="#000"/></svg>
<svg class="a" style="left:862px;top:582px" width="26" height="19"><path d="M1 7.500l3-2v4z" fill="#000"/><path d="M16 11l6 6" stroke="#c88828" stroke-width="2.800" stroke-linecap="round"/><circle cx="12.500" cy="6.500" r="5" fill="#dcecff" stroke="#8898b0" stroke-width="1.400"/><path d="M9.500 5.500c1-2 3-2.500 4.500-2" stroke="#fff" stroke-width="1.200" fill="none"/></svg>
<svg class="a" style="left:899.0px;top:583.8px" width="11.500" height="15" viewBox="0 0 13 17"><path d="M2.200 5.200c0-5 8-5 8 -0.700c0 3-4 3-4 6.500" fill="none" stroke="#222" stroke-width="3.600" transform="translate(.7 .8)"/><circle cx="6.900" cy="14.800" r="1.900" fill="#222"/><path d="M2 5c0-5 8-5 8-0.700c0 3-4 3-4 6.500" fill="none" stroke="#fafa00" stroke-width="2.700"/><circle cx="6" cy="14" r="1.600" fill="#fafa00"/></svg>
<div class="a" style="left:916px;top:559px;width:1px;height:44px;background:#8a8a8a"></div>
<div class="a" style="left:917.500px;top:564.500px;width:31.500px;height:32px;background:#0000ff"></div>
<div class="a" style="left:950.500px;top:564.500px;width:31px;height:32px;background:#ff0000;border:1px solid #111;box-shadow:inset 0 0 0 1px #fff"></div>
<svg class="a" style="left:951px;top:565px" width="30" height="32"><path d="M2 17L4.700 16L6.400 6.200H9L9.500 24.500H15.500L18.700 18H23L24 25.600H26.300V28.800H28.400" fill="none" stroke="#111" stroke-width="1.1"/></svg>
<div class="sb" style="left:966.500px;top:604.500px;width:17.500px;height:420px"></div>
<div class="th" style="left:966.500px;top:701px;width:17.500px;height:330px"></div>
<svg class="a" style="left:969px;top:608px" width="14" height="10"><path d="M2.500 7.500L7 3L11.500 7.500" fill="none" stroke="#444" stroke-width="1.8"/></svg>
<div class="a" style="left:467.5px;top:639.5px;width:490.5px;height:390.5px;background:#b4b4b4;box-shadow:inset 2px 2px 0 #cfcfcf,inset -3px -3px 0 #999"></div>
<div class="a" style="left:467.5px;top:611.5px;width:49.0px;height:31.0px;background:#b4b4b4;border-radius:3px 3px 0 0;box-shadow:inset 2px 2px 0 #d4d4d4,inset -2px 0 0 #8c8c8c"></div>
<div class="a" style="left:517.5px;top:614.5px;width:59.5px;height:25.0px;background:#afafaf;border-radius:3px 3px 0 0;box-shadow:inset 2px 2px 0 #cccccc,inset -2px 0 0 #8c8c8c"></div>
<div class="t " style="left:476.5px;top:618.0px;">Main</div>
<div class="t " style="left:525.5px;top:620.0px;">Settings</div>
<div class="t " style="left:487.5px;top:657.0px;">Mean</div>
<div class="leg" style="left:836px;top:648.500px;width:110px;height:22.500px"></div>
<div class="t " style="left:851.5px;top:652.5px;">esource</div>
<svg class="a" style="left:903px;top:651.500px" width="28.500" height="17"><rect width="28.500" height="17" fill="#000"/><path d="M2.600 12.500L12.300 3.500L22.600 11.800L27.200 7.800" fill="none" stroke="#fff" stroke-width="1"/><path d="M0.600 12.500h4M2.600 10.500v4M1.200 11.100l2.800 2.800M4 11.100l-2.800 2.800M10.300 3.500h4M12.300 1.500v4M10.900 2.100l2.800 2.800M13.700 2.100l-2.800 2.800M20.600 11.800h4M22.600 9.800v4M21.200 10.400l2.800 2.800M24 10.400l-2.800 2.800" stroke="#fff" stroke-width="0.8"/></svg>
<div class="a" style="left:478.5px;top:674.5px;width:467.5px;height:252.0px;background:linear-gradient(90deg,#dadada 0,#c6c6c6 5px,#c0c0c0 12px,#c0c0c0 calc(100% - 16px),#a6a6a6 calc(100% - 9px),#909090 100%);box-shadow:inset 0 2px 0 #d6d6d6,inset 0 -2px 0 #9a9a9a"></div>
<svg class="a" style="left:564.0px;top:683.0px" width="358.5" height="200.5" viewBox="564.0 683.0 358.5 200.5"><rect x="564.0" y="683.0" width="358.5" height="200.5" fill="#000"/><path d="M571.5 683.0V883.5M577.5 683.0V883.5M583.5 683.0V883.5M589.5 683.0V883.5M601.5 683.0V883.5M607.5 683.0V883.5M613.5 683.0V883.5M619.5 683.0V883.5M630.5 683.0V883.5M636.5 683.0V883.5M642.5 683.0V883.5M648.5 683.0V883.5M660.5 683.0V883.5M666.5 683.0V883.5M672.5 683.0V883.5M678.5 683.0V883.5M690.5 683.0V883.5M696.5 683.0V883.5M702.5 683.0V883.5M708.5 683.0V883.5M720.5 683.0V883.5M726.5 683.0V883.5M732.5 683.0V883.5M738.5 683.0V883.5M749.5 683.0V883.5M755.5 683.0V883.5M761.5 683.0V883.5M767.5 683.0V883.5M779.5 683.0V883.5M785.5 683.0V883.5M791.5 683.0V883.5M797.5 683.0V883.5M809.5 683.0V883.5M815.5 683.0V883.5M821.5 683.0V883.5M827.5 683.0V883.5M839.5 683.0V883.5M845.5 683.0V883.5M851.5 683.0V883.5M857.5 683.0V883.5M868.5 683.0V883.5M874.5 683.0V883.5M880.5 683.0V883.5M886.5 683.0V883.5M898.5 683.0V883.5M904.5 683.0V883.5M910.5 683.0V883.5M916.5 683.0V883.5M564.0 876.5H922.5M564.0 869.5H922.5M564.0 862.5H922.5M564.0 847.5H922.5M564.0 840.5H922.5M564.0 833.5H922.5M564.0 819.5H922.5M564.0 812.5H922.5M564.0 805.5H922.5M564.0 790.5H922.5M564.0 783.5H922.5M564.0 776.5H922.5M564.0 762.5H922.5M564.0 755.5H922.5M564.0 748.5H922.5M564.0 733.5H922.5M564.0 726.5H922.5M564.0 719.5H922.5M564.0 705.5H922.5M564.0 698.5H922.5M564.0 691.5H922.5" stroke="#003600" stroke-width="1" fill="none" shape-rendering="crispEdges"/><path d="M595.5 683.0V883.5M624.5 683.0V883.5M654.5 683.0V883.5M684.5 683.0V883.5M714.5 683.0V883.5M744.5 683.0V883.5M773.5 683.0V883.5M803.5 683.0V883.5M833.5 683.0V883.5M862.5 683.0V883.5M892.5 683.0V883.5M564.0 854.5H922.5M564.0 826.5H922.5M564.0 798.5H922.5M564.0 769.5H922.5M564.0 740.5H922.5M564.0 712.5H922.5" stroke="#006300" stroke-width="1" fill="none" shape-rendering="crispEdges"/><polyline points="565.5,868.5 571.5,869.5 577.5,873.5 583.5,866.5 589.5,868.5 595.5,871.5 601.5,867.5 607.5,873.5 613.5,866.5 619.5,864.5 625.5,872.5 625.5,742.5 625.5,742.5 625.5,684.5" fill="none" stroke="#fff" stroke-width="1.15"/><polyline points="636.5,684.5 636.5,716.5 637.5,716.5 637.5,843.5 643.5,843.5 648.5,844.5 654.5,840.5 660.5,845.5 666.5,837.5 672.5,838.5 678.5,836.5 684.5,838.5 690.5,843.5 696.5,837.5 702.5,834.5 708.5,830.5 714.5,831.5 720.5,819.5 726.5,824.5 732.5,817.5 738.5,810.5 744.5,802.5 750.5,795.5 756.5,792.5 762.5,788.5 767.5,790.5 774.5,796.5 780.5,799.5 785.5,800.5 791.5,802.5 797.5,797.5 803.5,795.5 809.5,800.5 815.5,794.5 821.5,789.5 827.5,790.5 827.5,864.5 828.5,864.5 828.5,883.5" fill="none" stroke="#fff" stroke-width="1.15"/><polyline points="839.5,883.5 839.5,871.5 845.5,868.5 851.5,873.5 857.5,869.5 863.5,874.5 868.5,873.5 875.5,872.5 881.5,872.5 886.5,874.5 892.5,870.5 898.5,872.5 904.5,871.5 910.5,875.5 916.5,871.5 922.5,871.5" fill="none" stroke="#fff" stroke-width="1.15"/><path d="M563.0 868.5h5M565.5 866.0v5M569.0 869.5h5M571.5 867.0v5M575.0 873.5h5M577.5 871.0v5M581.0 866.5h5M583.5 864.0v5M587.0 868.5h5M589.5 866.0v5M593.0 871.5h5M595.5 869.0v5M599.0 867.5h5M601.5 865.0v5M605.0 873.5h5M607.5 871.0v5M611.0 866.5h5M613.5 864.0v5M617.0 864.5h5M619.5 862.0v5M623.0 872.5h5M625.5 870.0v5M635.0 843.5h5M637.5 841.0v5M641.0 843.5h5M643.5 841.0v5M646.0 844.5h5M648.5 842.0v5M652.0 840.5h5M654.5 838.0v5M658.0 845.5h5M660.5 843.0v5M664.0 837.5h5M666.5 835.0v5M670.0 838.5h5M672.5 836.0v5M676.0 836.5h5M678.5 834.0v5M682.0 838.5h5M684.5 836.0v5M688.0 843.5h5M690.5 841.0v5M694.0 837.5h5M696.5 835.0v5M700.0 834.5h5M702.5 832.0v5M706.0 830.5h5M708.5 828.0v5M712.0 831.5h5M714.5 829.0v5M718.0 819.5h5M720.5 817.0v5M724.0 824.5h5M726.5 822.0v5M730.0 817.5h5M732.5 815.0v5M736.0 810.5h5M738.5 808.0v5M742.0 802.5h5M744.5 800.0v5M748.0 795.5h5M750.5 793.0v5M754.0 792.5h5M756.5 790.0v5M760.0 788.5h5M762.5 786.0v5M765.0 790.5h5M767.5 788.0v5M772.0 796.5h5M774.5 794.0v5M778.0 799.5h5M780.5 797.0v5M783.0 800.5h5M785.5 798.0v5M789.0 802.5h5M791.5 800.0v5M795.0 797.5h5M797.5 795.0v5M801.0 795.5h5M803.5 793.0v5M807.0 800.5h5M809.5 798.0v5M813.0 794.5h5M815.5 792.0v5M819.0 789.5h5M821.5 787.0v5M825.0 790.5h5M827.5 788.0v5M837.0 871.5h5M839.5 869.0v5M843.0 868.5h5M845.5 866.0v5M849.0 873.5h5M851.5 871.0v5M855.0 869.5h5M857.5 867.0v5M861.0 874.5h5M863.5 872.0v5M866.0 873.5h5M868.5 871.0v5M873.0 872.5h5M875.5 870.0v5M879.0 872.5h5M881.5 870.0v5M884.0 874.5h5M886.5 872.0v5M890.0 870.5h5M892.5 868.0v5M896.0 872.5h5M898.5 870.0v5M902.0 871.5h5M904.5 869.0v5M908.0 875.5h5M910.5 873.0v5M914.0 871.5h5M916.5 869.0v5M920.0 871.5h5M922.5 869.0v5" stroke="#fff" stroke-width="1" shape-rendering="crispEdges"/><path d="M564.5 683.5V883.0" stroke="#7a7a7a"/></svg>
<div class="a" style="left:564.0px;top:883.5px;width:359.5px;height:1px;background:#dedede"></div><div class="a" style="left:922.5px;top:683.0px;width:1px;height:201.5px;background:#dedede"></div>
<div class="t r" style="right:602.5px;top:876.5px;letter-spacing:-0.3px">0</div>
<div class="tick" style="left:558px;top:883px;width:5px;height:1px"></div>
<div class="t r" style="right:602.5px;top:848.0px;letter-spacing:-0.3px">2E-6</div>
<div class="tick" style="left:558px;top:854px;width:5px;height:1px"></div>
<div class="t r" style="right:602.5px;top:819.5px;letter-spacing:-0.3px">4E-6</div>
<div class="tick" style="left:558px;top:826px;width:5px;height:1px"></div>
<div class="t r" style="right:602.5px;top:791.0px;letter-spacing:-0.3px">6E-6</div>
<div class="tick" style="left:558px;top:798px;width:5px;height:1px"></div>
<div class="t r" style="right:602.5px;top:762.5px;letter-spacing:-0.3px">8E-6</div>
<div class="tick" style="left:558px;top:769px;width:5px;height:1px"></div>
<div class="t r" style="right:602.5px;top:734.0px;letter-spacing:-0.3px">1E-5</div>
<div class="tick" style="left:558px;top:740px;width:5px;height:1px"></div>
<div class="t r" style="right:602.5px;top:705.5px;letter-spacing:-0.3px">1.2E-5</div>
<div class="tick" style="left:558px;top:712px;width:5px;height:1px"></div>
<div class="t r" style="right:602.5px;top:677.0px;letter-spacing:-0.3px">1.4E-5</div>
<div class="tick" style="left:558px;top:684px;width:5px;height:1px"></div>
<div class="t" style="left:565.0px;top:892.0px;width:200px;margin-left:-100px;text-align:center;letter-spacing:-0.5px">0</div>
<div class="tick" style="left:565px;top:885px;width:1px;height:4px"></div>
<div class="t" style="left:594.8px;top:892.0px;width:200px;margin-left:-100px;text-align:center;letter-spacing:-0.5px">5</div>
<div class="tick" style="left:595px;top:885px;width:1px;height:4px"></div>
<div class="t" style="left:624.5px;top:892.0px;width:200px;margin-left:-100px;text-align:center;letter-spacing:-0.5px">10</div>
<div class="tick" style="left:624px;top:885px;width:1px;height:4px"></div>
<div class="t" style="left:654.2px;top:892.0px;width:200px;margin-left:-100px;text-align:center;letter-spacing:-0.5px">15</div>
<div class="tick" style="left:654px;top:885px;width:1px;height:4px"></div>
<div class="t" style="left:684.0px;top:892.0px;width:200px;margin-left:-100px;text-align:center;letter-spacing:-0.5px">20</div>
<div class="tick" style="left:684px;top:885px;width:1px;height:4px"></div>
<div class="t" style="left:713.8px;top:892.0px;width:200px;margin-left:-100px;text-align:center;letter-spacing:-0.5px">25</div>
<div class="tick" style="left:714px;top:885px;width:1px;height:4px"></div>
<div class="t" style="left:743.5px;top:892.0px;width:200px;margin-left:-100px;text-align:center;letter-spacing:-0.5px">30</div>
<div class="tick" style="left:744px;top:885px;width:1px;height:4px"></div>
<div class="t" style="left:773.2px;top:892.0px;width:200px;margin-left:-100px;text-align:center;letter-spacing:-0.5px">35</div>
<div class="tick" style="left:773px;top:885px;width:1px;height:4px"></div>
<div class="t" style="left:803.0px;top:892.0px;width:200px;margin-left:-100px;text-align:center;letter-spacing:-0.5px">40</div>
<div class="tick" style="left:803px;top:885px;width:1px;height:4px"></div>
<div class="t" style="left:832.8px;top:892.0px;width:200px;margin-left:-100px;text-align:center;letter-spacing:-0.5px">45</div>
<div class="tick" style="left:833px;top:885px;width:1px;height:4px"></div>
<div class="t" style="left:862.5px;top:892.0px;width:200px;margin-left:-100px;text-align:center;letter-spacing:-0.5px">50</div>
<div class="tick" style="left:862px;top:885px;width:1px;height:4px"></div>
<div class="t" style="left:892.2px;top:892.0px;width:200px;margin-left:-100px;text-align:center;letter-spacing:-0.5px">55</div>
<div class="tick" style="left:892px;top:885px;width:1px;height:4px"></div>
<div class="t" style="left:922.0px;top:892.0px;width:200px;margin-left:-100px;text-align:center;letter-spacing:-0.5px">60</div>
<div class="tick" style="left:922px;top:885px;width:1px;height:4px"></div>
<div class="t" style="left:739.5px;top:909.0px;width:200px;margin-left:-100px;text-align:center;">Acq. number</div>
<div class="t" style="left:463px;top:776px;width:100px;text-align:center;transform:rotate(-90deg)">Current (A)</div>
<div class="t " style="left:488.0px;top:945.0px;">Raw</div>
<div class="leg" style="left:607.500px;top:937.500px;width:110.500px;height:21px"></div>
<div class="t " style="left:623.5px;top:941.0px;">esource</div>
<svg class="a" style="left:675.500px;top:939.500px" width="28" height="16.500"><rect width="28" height="16.500" fill="#000"/><path d="M2 13L9 3.500L17 13L26 3" fill="none" stroke="#fff" stroke-width="1.1"/></svg>
<div class="a" style="left:479.0px;top:962.5px;width:239.0px;height:77.5px;background:linear-gradient(90deg,#dadada 0,#c6c6c6 5px,#c0c0c0 12px,#c0c0c0 calc(100% - 16px),#a6a6a6 calc(100% - 9px),#909090 100%);box-shadow:inset 0 2px 0 #d6d6d6,inset 0 -2px 0 #9a9a9a"></div>
<svg class="a" style="left:547.5px;top:971.0px" width="159.0" height="52.0" viewBox="547.5 971.0 159.0 52.0"><rect x="547.5" y="971.0" width="159.0" height="52.0" fill="#000"/><path d="M555.5 971.0V1023.0M562.5 971.0V1023.0M568.5 971.0V1023.0M575.5 971.0V1023.0M581.5 971.0V1023.0M588.5 971.0V1023.0M595.5 971.0V1023.0M608.5 971.0V1023.0M614.5 971.0V1023.0M621.5 971.0V1023.0M628.5 971.0V1023.0M634.5 971.0V1023.0M641.5 971.0V1023.0M647.5 971.0V1023.0M660.5 971.0V1023.0M667.5 971.0V1023.0M674.5 971.0V1023.0M680.5 971.0V1023.0M687.5 971.0V1023.0M693.5 971.0V1023.0M700.5 971.0V1023.0M547.5 976.5H706.5M547.5 980.5H706.5M547.5 984.5H706.5M547.5 988.5H706.5M547.5 997.5H706.5M547.5 1001.5H706.5M547.5 1005.5H706.5M547.5 1010.5H706.5M547.5 1018.5H706.5M547.5 1022.5H706.5M547.5 1027.5H706.5M547.5 1031.5H706.5" stroke="#003600" stroke-width="1" fill="none" shape-rendering="crispEdges"/><path d="M601.5 971.0V1023.0M654.5 971.0V1023.0M547.5 993.5H706.5M547.5 1014.5H706.5" stroke="#006300" stroke-width="1" fill="none" shape-rendering="crispEdges"/><path d="M554.5 1023V1019.7M555.5 1023V1019.0M556.5 1023V1014.3M557.5 1023V1008.3M558.5 1023V1016.6M559.5 1023V1015.7M560.5 1023V1012.2M561.5 1023V1017.9M562.5 1023V1016.9M563.5 1023V1011.5M564.5 1023V1012.4M565.5 1023V1017.9M566.5 1023V1016.8M567.5 1023V1016.7M568.5 1023V1014.2M569.5 1023V1014.6M570.5 1023V1013.7M571.5 1023V1012.7M572.5 1023V1014.5M573.5 1023V1013.4M574.5 1023V1005.2M575.5 1023V1015.7M576.5 1023V1016.5M577.5 1023V1017.9M578.5 1023V1004.8M579.5 1023V1018.7M580.5 1023V1015.6M581.5 1023V1012.7M582.5 1023V1012.0M583.5 1023V1017.8M584.5 1023V1011.7M585.5 1023V1014.3M586.5 1023V1023.2M587.5 1023V1017.4M588.5 1023V1017.4M589.5 1023V1019.6M590.5 1023V1024.8M591.5 1023V1021.2M592.5 1023V1012.2M593.5 1023V1018.5M594.5 1023V1011.4M595.5 1023V1016.6M596.5 1023V1021.2M597.5 1023V1021.8M598.5 1023V1022.0M599.5 1023V1010.9M600.5 1023V1006.1M601.5 1023V1021.2M602.5 1023V1008.3M603.5 1023V1017.2M604.5 1023V1007.9M605.5 1023V1012.4M606.5 1023V1007.6M607.5 1023V1011.1M608.5 1023V1009.1M609.5 1023V1004.5M610.5 1023V1002.7M611.5 1023V1011.2M612.5 1023V1011.7M613.5 1023V1012.6M614.5 1023V1014.5M615.5 1023V1005.5M616.5 1023V1006.1M617.5 1023V1002.9M618.5 1023V1018.1M619.5 1023V1004.5M620.5 1023V1012.5M621.5 1023V1011.9M622.5 1023V1017.5M623.5 1023V1013.2M624.5 1023V1013.3M625.5 1023V1006.0M626.5 1023V1002.2M627.5 1023V993.3M628.5 1023V1006.4M629.5 1023V1008.0M630.5 1023V1017.7M631.5 1023V1008.7M632.5 1023V999.8M633.5 1023V999.7M634.5 1023V1018.4M635.5 1023V1018.2M636.5 1023V1011.1M637.5 1023V1002.7M638.5 1023V1002.8M639.5 1023V1010.4M640.5 1023V1017.9M641.5 1023V1017.3M642.5 1023V1020.3M643.5 1023V1017.4M644.5 1023V1023.4M645.5 1023V1006.9M646.5 1023V1010.7M647.5 1023V1012.5M648.5 1023V1015.2M649.5 1023V997.8M650.5 1023V1016.7M651.5 1023V1012.0M652.5 1023V1021.2M653.5 1023V1012.6M654.5 1023V1012.0M655.5 1023V1012.9M656.5 1023V1003.4M657.5 1023V1006.2M658.5 1023V1009.3M659.5 1023V1015.0M660.5 1023V1014.4M661.5 1023V1006.3M662.5 1023V1004.6M663.5 1023V1018.0M664.5 1023V1014.0M665.5 1023V1009.7M666.5 1023V1012.0M667.5 1023V1016.3M668.5 1023V1017.3M669.5 1023V1016.9M670.5 1023V1011.8M671.5 1023V1000.3M672.5 1023V1007.4M673.5 1023V1014.8M674.5 1023V1006.3M675.5 1023V1016.4M676.5 1023V1018.6M677.5 1023V1001.7M678.5 1023V1006.2M679.5 1023V1007.0M673.500 1023V993M672.500 1023V997M563.500 1023V997M566.500 1023V1001M578.500 1023V1000M615.500 1023V995M624.500 1023V998M600.500 1023V1004M646.500 1023V1003M662.500 1023V1001" stroke="#fff" stroke-width="1" shape-rendering="crispEdges"/><path d="M548.0 971.5V1022.0" stroke="#7a7a7a"/></svg>
<div class="a" style="left:547.5px;top:1023.0px;width:160.0px;height:1px;background:#dedede"></div><div class="a" style="left:706.5px;top:971.0px;width:1px;height:53.0px;background:#dedede"></div>
<div class="t r" style="right:619.0px;top:965.5px;letter-spacing:-0.3px">1.5E-5</div>
<div class="tick" style="left:542px;top:972px;width:5px;height:1px"></div>
<div class="t r" style="right:619.0px;top:986.7px;letter-spacing:-0.3px">1E-5</div>
<div class="tick" style="left:542px;top:993px;width:5px;height:1px"></div>
<div class="t r" style="right:619.0px;top:1007.9px;letter-spacing:-0.3px">5E-6</div>
<div class="tick" style="left:542px;top:1014px;width:5px;height:1px"></div>
<div class="t" style="left:447px;top:1015px;width:100px;text-align:center;transform:rotate(-90deg)">Current (A)</div>
<div class="t " style="left:731.5px;top:945.5px;">Cycle time (ms)</div>
<div class="fld " style="left:730.0px;top:961.0px;width:54.0px;height:24.5px;"><div class="t" style="top:2.8px;">624</div></div>
<div class="t r" style="right:219.5px;top:939.0px;">Target (A)</div>
<svg class="a" style="left:875.500px;top:953.500px" width="11" height="25"><rect x=".5" y=".5" width="10" height="24" rx="4" fill="#c6c6c6" stroke="#8a8a8a"/><path d="M1 12.500h9" stroke="#8a8a8a"/><path d="M3 9L5.500 3.500L8 9M3 16L5.500 21.500L8 16" fill="none" stroke="#777"/></svg>
<div class="fld w" style="left:886.5px;top:955.5px;width:53.5px;height:22.5px;"><div class="t" style="top:1.8px;">6E-6</div></div>
<div class="t r" style="right:219.0px;top:982.0px;">HeaterIncr (A)</div>
<div class="fld " style="left:866.5px;top:998.0px;width:71.5px;height:32.0px;"><div class="t" style="top:6.5px;top:2.5px">1.407m</div></div>
<div class="t " style="left:728.0px;top:1015.5px;">PID gains</div>
</body></html>
